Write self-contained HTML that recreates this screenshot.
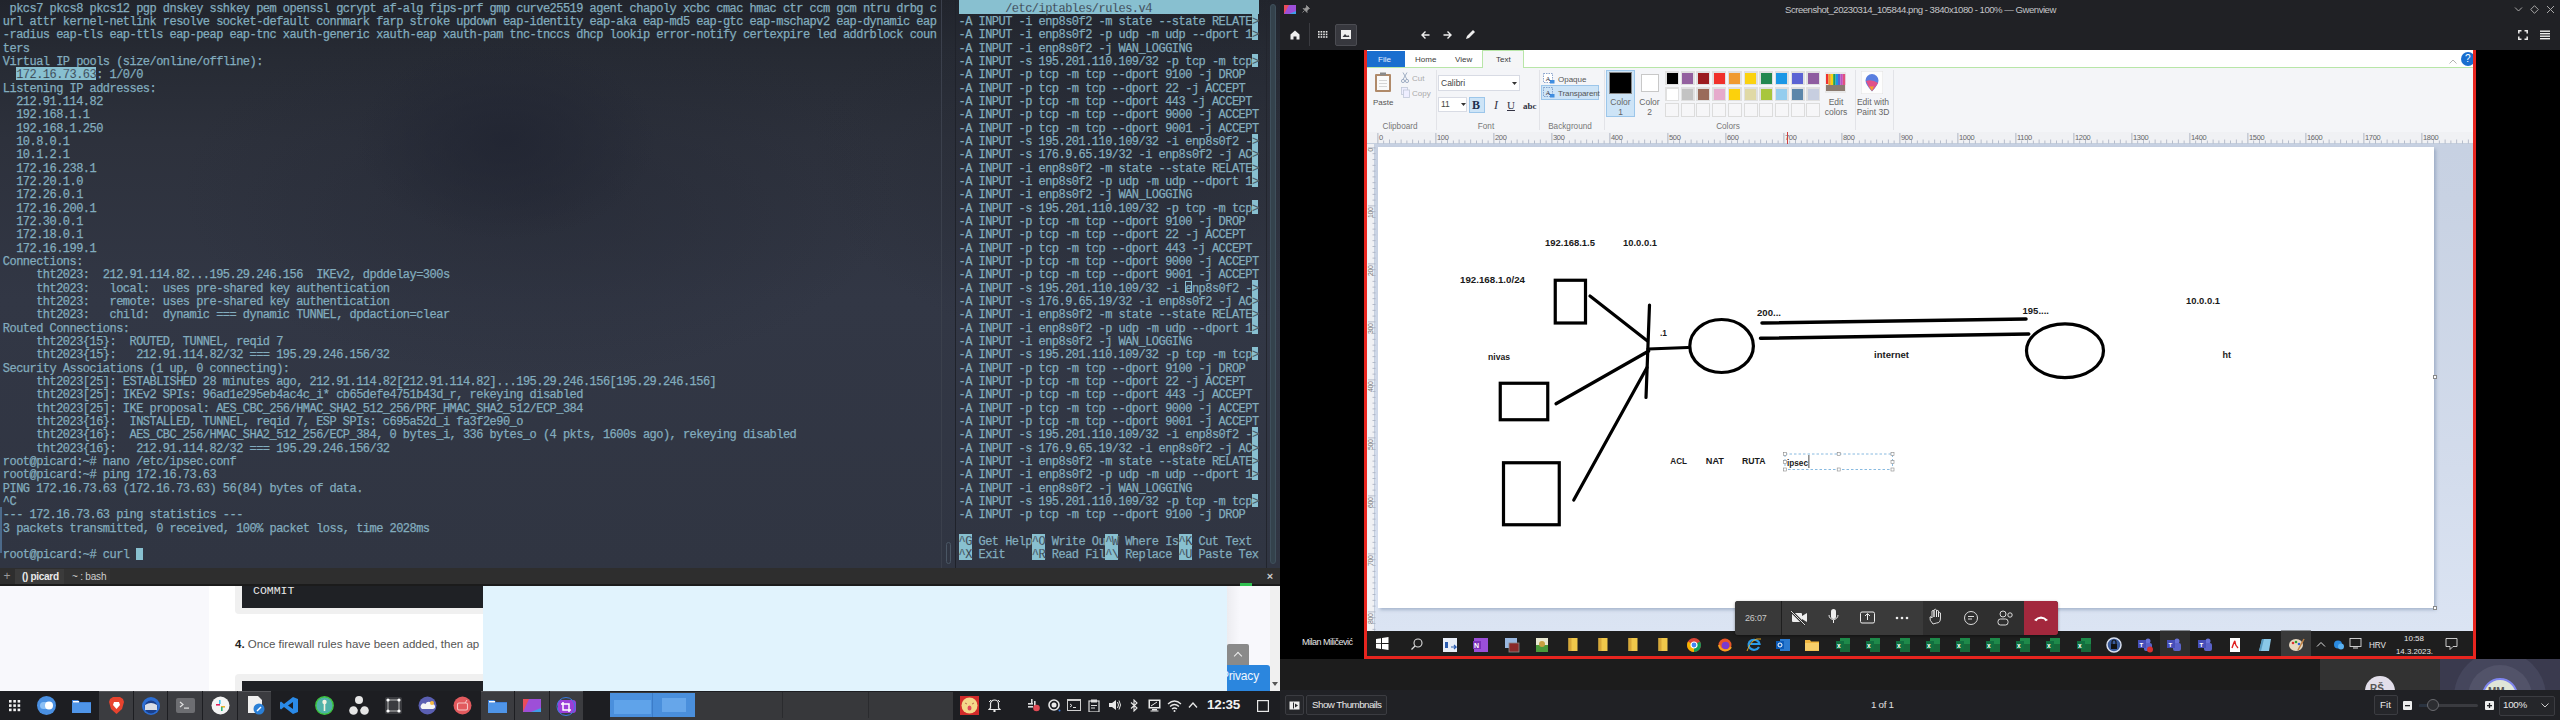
<!DOCTYPE html><html><head><meta charset="utf-8"><style>
*{box-sizing:border-box}
body{margin:0;width:2560px;height:720px;overflow:hidden;position:relative;background:#000;font-family:"Liberation Sans",sans-serif}
.a{position:absolute}
.term{position:absolute;left:0;top:0;width:1280px;height:568px;overflow:hidden;
 background:
  radial-gradient(ellipse 150px 100px at 506px 140px, rgba(33,37,50,0.85), rgba(33,37,50,0) 100%),
  radial-gradient(ellipse 360px 190px at 540px 190px, rgba(36,40,52,0.55), rgba(36,40,52,0) 100%),
  radial-gradient(ellipse 300px 200px at 1110px 150px, rgba(36,40,50,0.5), rgba(36,40,50,0) 100%),
  linear-gradient(180deg,#21242c 0px,#262a33 50px,#2d313c 140px,#323745 300px,#303542 568px);}
.tl{position:absolute;white-space:pre;font-family:"Liberation Mono",monospace;font-size:12px;line-height:13.333px;height:13.333px;color:#82acbe;letter-spacing:-0.5333px;padding-top:2.6px;-webkit-text-stroke:0.25px #82acbe}
.hl{background:#88c0d0;color:#2a2f3a}
</style></head><body>

<div class="term">
<div class="tl" style="left:2.8px;top:0.00px"> pkcs7 pkcs8 pkcs12 pgp dnskey sshkey pem openssl gcrypt af-alg fips-prf gmp curve25519 agent chapoly xcbc cmac hmac ctr ccm gcm ntru drbg c</div>
<div class="tl" style="left:2.8px;top:13.33px">url attr kernel-netlink resolve socket-default connmark farp stroke updown eap-identity eap-aka eap-md5 eap-gtc eap-mschapv2 eap-dynamic eap</div>
<div class="tl" style="left:2.8px;top:26.67px">-radius eap-tls eap-ttls eap-peap eap-tnc xauth-generic xauth-eap xauth-pam tnc-tnccs dhcp lookip error-notify certexpire led addrblock coun</div>
<div class="tl" style="left:2.8px;top:40.00px">ters</div>
<div class="tl" style="left:2.8px;top:53.33px">Virtual IP pools (size/online/offline):</div>
<div class="a" style="left:16.13px;top:66.97px;width:80.00px;height:13.33px;background:#88c0d0"></div>
<div class="tl" style="left:2.8px;top:66.67px">  <span style="color:#2a2f3a">172.16.73.63</span>: 1/0/0</div>
<div class="tl" style="left:2.8px;top:80.00px">Listening IP addresses:</div>
<div class="tl" style="left:2.8px;top:93.33px">  212.91.114.82</div>
<div class="tl" style="left:2.8px;top:106.67px">  192.168.1.1</div>
<div class="tl" style="left:2.8px;top:120.00px">  192.168.1.250</div>
<div class="tl" style="left:2.8px;top:133.33px">  10.8.0.1</div>
<div class="tl" style="left:2.8px;top:146.67px">  10.1.2.1</div>
<div class="tl" style="left:2.8px;top:160.00px">  172.16.238.1</div>
<div class="tl" style="left:2.8px;top:173.33px">  172.20.1.0</div>
<div class="tl" style="left:2.8px;top:186.67px">  172.26.0.1</div>
<div class="tl" style="left:2.8px;top:200.00px">  172.16.200.1</div>
<div class="tl" style="left:2.8px;top:213.33px">  172.30.0.1</div>
<div class="tl" style="left:2.8px;top:226.67px">  172.18.0.1</div>
<div class="tl" style="left:2.8px;top:240.00px">  172.16.199.1</div>
<div class="tl" style="left:2.8px;top:253.33px">Connections:</div>
<div class="tl" style="left:2.8px;top:266.67px">     tht2023:  212.91.114.82...195.29.246.156  IKEv2, dpddelay=300s</div>
<div class="tl" style="left:2.8px;top:280.00px">     tht2023:   local:  uses pre-shared key authentication</div>
<div class="tl" style="left:2.8px;top:293.33px">     tht2023:   remote: uses pre-shared key authentication</div>
<div class="tl" style="left:2.8px;top:306.67px">     tht2023:   child:  dynamic === dynamic TUNNEL, dpdaction=clear</div>
<div class="tl" style="left:2.8px;top:320.00px">Routed Connections:</div>
<div class="tl" style="left:2.8px;top:333.33px">     tht2023{15}:  ROUTED, TUNNEL, reqid 7</div>
<div class="tl" style="left:2.8px;top:346.67px">     tht2023{15}:   212.91.114.82/32 === 195.29.246.156/32</div>
<div class="tl" style="left:2.8px;top:360.00px">Security Associations (1 up, 0 connecting):</div>
<div class="tl" style="left:2.8px;top:373.33px">     tht2023[25]: ESTABLISHED 28 minutes ago, 212.91.114.82[212.91.114.82]...195.29.246.156[195.29.246.156]</div>
<div class="tl" style="left:2.8px;top:386.67px">     tht2023[25]: IKEv2 SPIs: 96ad1e295eb4ac4c_i* cb65defe4751b43d_r, rekeying disabled</div>
<div class="tl" style="left:2.8px;top:400.00px">     tht2023[25]: IKE proposal: AES_CBC_256/HMAC_SHA2_512_256/PRF_HMAC_SHA2_512/ECP_384</div>
<div class="tl" style="left:2.8px;top:413.33px">     tht2023{16}:  INSTALLED, TUNNEL, reqid 7, ESP SPIs: c695a52d_i fa3f2e90_o</div>
<div class="tl" style="left:2.8px;top:426.67px">     tht2023{16}:  AES_CBC_256/HMAC_SHA2_512_256/ECP_384, 0 bytes_i, 336 bytes_o (4 pkts, 1600s ago), rekeying disabled</div>
<div class="tl" style="left:2.8px;top:440.00px">     tht2023{16}:   212.91.114.82/32 === 195.29.246.156/32</div>
<div class="tl" style="left:2.8px;top:453.33px">root@picard:~# nano /etc/ipsec.conf</div>
<div class="tl" style="left:2.8px;top:466.67px">root@picard:~# ping 172.16.73.63</div>
<div class="tl" style="left:2.8px;top:480.00px">PING 172.16.73.63 (172.16.73.63) 56(84) bytes of data.</div>
<div class="tl" style="left:2.8px;top:493.33px">^C</div>
<div class="tl" style="left:2.8px;top:506.67px">--- 172.16.73.63 ping statistics ---</div>
<div class="tl" style="left:2.8px;top:520.00px">3 packets transmitted, 0 received, 100% packet loss, time 2028ms</div>
<div class="tl" style="left:2.8px;top:546.67px">root@picard:~# curl </div>
<div class="a" style="left:136.13px;top:547.67px;width:6.5px;height:12px;background:#88c0d0"></div>
<div class="a" style="left:0;top:506.67px;width:2px;height:46.67px;background:#4c6a8a"></div>
<div class="a" style="left:941px;top:0;width:1px;height:568px;background:#3b404c"></div>
<div class="a" style="left:955px;top:0;width:1px;height:568px;background:#1f222a"></div>
<div class="a" style="left:946px;top:542px;width:5px;height:22px;border:1px solid #4a5664;border-radius:3px"></div>
<div class="a" style="left:1266px;top:0;width:1px;height:568px;background:#22252d"></div>
<div class="a" style="left:1270px;top:4px;width:6px;height:560px;background:#34424c;border:1px solid #3f505c;border-radius:3px"></div>
<div class="a" style="left:958.5px;top:0.30px;width:300.00px;height:13.33px;background:#88c0d0"></div>
<div class="tl" style="left:958.5px;top:0.00px;color:#2a2f3a">       /etc/iptables/rules.v4</div>
<div class="a" style="left:1251.83px;top:13.63px;width:6.67px;height:26.67px;background:#88c0d0"></div>
<div class="a" style="left:1251.83px;top:53.63px;width:6.67px;height:13.33px;background:#88c0d0"></div>
<div class="a" style="left:1251.83px;top:133.63px;width:6.67px;height:53.33px;background:#88c0d0"></div>
<div class="a" style="left:1251.83px;top:200.30px;width:6.67px;height:13.33px;background:#88c0d0"></div>
<div class="a" style="left:1251.83px;top:280.30px;width:6.67px;height:53.33px;background:#88c0d0"></div>
<div class="a" style="left:1251.83px;top:346.97px;width:6.67px;height:13.33px;background:#88c0d0"></div>
<div class="a" style="left:1251.83px;top:426.97px;width:6.67px;height:53.33px;background:#88c0d0"></div>
<div class="a" style="left:1251.83px;top:493.63px;width:6.67px;height:13.33px;background:#88c0d0"></div>
<div class="tl" style="left:958.5px;top:13.33px">-A INPUT -i enp8s0f2 -m state --state RELATE<span style="color:#2a2f3a">&gt;</span></div>
<div class="tl" style="left:958.5px;top:26.67px">-A INPUT -i enp8s0f2 -p udp -m udp --dport 1<span style="color:#2a2f3a">&gt;</span></div>
<div class="tl" style="left:958.5px;top:40.00px">-A INPUT -i enp8s0f2 -j WAN_LOGGING</div>
<div class="tl" style="left:958.5px;top:53.33px">-A INPUT -s 195.201.110.109/32 -p tcp -m tcp<span style="color:#2a2f3a">&gt;</span></div>
<div class="tl" style="left:958.5px;top:66.67px">-A INPUT -p tcp -m tcp --dport 9100 -j DROP</div>
<div class="tl" style="left:958.5px;top:80.00px">-A INPUT -p tcp -m tcp --dport 22 -j ACCEPT</div>
<div class="tl" style="left:958.5px;top:93.33px">-A INPUT -p tcp -m tcp --dport 443 -j ACCEPT</div>
<div class="tl" style="left:958.5px;top:106.67px">-A INPUT -p tcp -m tcp --dport 9000 -j ACCEPT</div>
<div class="tl" style="left:958.5px;top:120.00px">-A INPUT -p tcp -m tcp --dport 9001 -j ACCEPT</div>
<div class="tl" style="left:958.5px;top:133.33px">-A INPUT -s 195.201.110.109/32 -i enp8s0f2 -<span style="color:#2a2f3a">&gt;</span></div>
<div class="tl" style="left:958.5px;top:146.67px">-A INPUT -s 176.9.65.19/32 -i enp8s0f2 -j AC<span style="color:#2a2f3a">&gt;</span></div>
<div class="tl" style="left:958.5px;top:160.00px">-A INPUT -i enp8s0f2 -m state --state RELATE<span style="color:#2a2f3a">&gt;</span></div>
<div class="tl" style="left:958.5px;top:173.33px">-A INPUT -i enp8s0f2 -p udp -m udp --dport 1<span style="color:#2a2f3a">&gt;</span></div>
<div class="tl" style="left:958.5px;top:186.67px">-A INPUT -i enp8s0f2 -j WAN_LOGGING</div>
<div class="tl" style="left:958.5px;top:200.00px">-A INPUT -s 195.201.110.109/32 -p tcp -m tcp<span style="color:#2a2f3a">&gt;</span></div>
<div class="tl" style="left:958.5px;top:213.33px">-A INPUT -p tcp -m tcp --dport 9100 -j DROP</div>
<div class="tl" style="left:958.5px;top:226.67px">-A INPUT -p tcp -m tcp --dport 22 -j ACCEPT</div>
<div class="tl" style="left:958.5px;top:240.00px">-A INPUT -p tcp -m tcp --dport 443 -j ACCEPT</div>
<div class="tl" style="left:958.5px;top:253.33px">-A INPUT -p tcp -m tcp --dport 9000 -j ACCEPT</div>
<div class="tl" style="left:958.5px;top:266.67px">-A INPUT -p tcp -m tcp --dport 9001 -j ACCEPT</div>
<div class="tl" style="left:958.5px;top:280.00px">-A INPUT -s 195.201.110.109/32 -i enp8s0f2 -<span style="color:#2a2f3a">&gt;</span></div>
<div class="tl" style="left:958.5px;top:293.33px">-A INPUT -s 176.9.65.19/32 -i enp8s0f2 -j AC<span style="color:#2a2f3a">&gt;</span></div>
<div class="tl" style="left:958.5px;top:306.67px">-A INPUT -i enp8s0f2 -m state --state RELATE<span style="color:#2a2f3a">&gt;</span></div>
<div class="tl" style="left:958.5px;top:320.00px">-A INPUT -i enp8s0f2 -p udp -m udp --dport 1<span style="color:#2a2f3a">&gt;</span></div>
<div class="tl" style="left:958.5px;top:333.33px">-A INPUT -i enp8s0f2 -j WAN_LOGGING</div>
<div class="tl" style="left:958.5px;top:346.67px">-A INPUT -s 195.201.110.109/32 -p tcp -m tcp<span style="color:#2a2f3a">&gt;</span></div>
<div class="tl" style="left:958.5px;top:360.00px">-A INPUT -p tcp -m tcp --dport 9100 -j DROP</div>
<div class="tl" style="left:958.5px;top:373.33px">-A INPUT -p tcp -m tcp --dport 22 -j ACCEPT</div>
<div class="tl" style="left:958.5px;top:386.67px">-A INPUT -p tcp -m tcp --dport 443 -j ACCEPT</div>
<div class="tl" style="left:958.5px;top:400.00px">-A INPUT -p tcp -m tcp --dport 9000 -j ACCEPT</div>
<div class="tl" style="left:958.5px;top:413.33px">-A INPUT -p tcp -m tcp --dport 9001 -j ACCEPT</div>
<div class="tl" style="left:958.5px;top:426.67px">-A INPUT -s 195.201.110.109/32 -i enp8s0f2 -<span style="color:#2a2f3a">&gt;</span></div>
<div class="tl" style="left:958.5px;top:440.00px">-A INPUT -s 176.9.65.19/32 -i enp8s0f2 -j AC<span style="color:#2a2f3a">&gt;</span></div>
<div class="tl" style="left:958.5px;top:453.33px">-A INPUT -i enp8s0f2 -m state --state RELATE<span style="color:#2a2f3a">&gt;</span></div>
<div class="tl" style="left:958.5px;top:466.67px">-A INPUT -i enp8s0f2 -p udp -m udp --dport 1<span style="color:#2a2f3a">&gt;</span></div>
<div class="tl" style="left:958.5px;top:480.00px">-A INPUT -i enp8s0f2 -j WAN_LOGGING</div>
<div class="tl" style="left:958.5px;top:493.33px">-A INPUT -s 195.201.110.109/32 -p tcp -m tcp<span style="color:#2a2f3a">&gt;</span></div>
<div class="tl" style="left:958.5px;top:506.67px">-A INPUT -p tcp -m tcp --dport 9100 -j DROP</div>
<div class="a" style="left:1185.17px;top:280.50px;width:6.67px;height:12.33px;border:1px solid #88c0d0"></div>
<div class="a" style="left:958.50px;top:533.63px;width:13.33px;height:13.33px;background:#88c0d0"></div>
<div class="tl" style="left:958.50px;top:533.33px;color:#2a2f3a">^G</div>
<div class="tl" style="left:971.83px;top:533.33px"> Get Help</div>
<div class="a" style="left:1031.83px;top:533.63px;width:13.33px;height:13.33px;background:#88c0d0"></div>
<div class="tl" style="left:1031.83px;top:533.33px;color:#2a2f3a">^O</div>
<div class="tl" style="left:1045.17px;top:533.33px"> Write Ou</div>
<div class="a" style="left:1105.17px;top:533.63px;width:13.33px;height:13.33px;background:#88c0d0"></div>
<div class="tl" style="left:1105.17px;top:533.33px;color:#2a2f3a">^W</div>
<div class="tl" style="left:1118.50px;top:533.33px"> Where Is</div>
<div class="a" style="left:1178.50px;top:533.63px;width:13.33px;height:13.33px;background:#88c0d0"></div>
<div class="tl" style="left:1178.50px;top:533.33px;color:#2a2f3a">^K</div>
<div class="tl" style="left:1191.83px;top:533.33px"> Cut Text</div>
<div class="a" style="left:958.50px;top:546.97px;width:13.33px;height:13.33px;background:#88c0d0"></div>
<div class="tl" style="left:958.50px;top:546.67px;color:#2a2f3a">^X</div>
<div class="tl" style="left:971.83px;top:546.67px"> Exit    </div>
<div class="a" style="left:1031.83px;top:546.97px;width:13.33px;height:13.33px;background:#88c0d0"></div>
<div class="tl" style="left:1031.83px;top:546.67px;color:#2a2f3a">^R</div>
<div class="tl" style="left:1045.17px;top:546.67px"> Read Fil</div>
<div class="a" style="left:1105.17px;top:546.97px;width:13.33px;height:13.33px;background:#88c0d0"></div>
<div class="tl" style="left:1105.17px;top:546.67px;color:#2a2f3a">^\</div>
<div class="tl" style="left:1118.50px;top:546.67px"> Replace </div>
<div class="a" style="left:1178.50px;top:546.97px;width:13.33px;height:13.33px;background:#88c0d0"></div>
<div class="tl" style="left:1178.50px;top:546.67px;color:#2a2f3a">^U</div>
<div class="tl" style="left:1191.83px;top:546.67px"> Paste Tex</div>
</div>
<div class="a" style="left:0;top:568px;width:1280px;height:18px;background:#2e2e2e;border-bottom:2px solid #1b1b1b"></div>
<div class="a" style="left:0;top:568px;width:14px;height:16px;color:#9a9a9a;font-size:12px;line-height:16px;text-align:center">+</div>
<div class="a" style="left:15px;top:569px;width:49px;height:15px;background:#3b3b3b"></div>
<div class="a" style="left:22px;top:569px;font-size:10px;line-height:15px;color:#eaeaea;font-weight:bold;letter-spacing:-0.3px">() picard</div>
<div class="a" style="left:64px;top:569px;width:46px;height:15px;background:#333333"></div>
<div class="a" style="left:72px;top:569px;font-size:10px;line-height:15px;color:#cfcfcf;letter-spacing:-0.2px">~ : bash</div>
<div class="a" style="left:1264px;top:568px;width:12px;height:16px;color:#cccccc;font-size:11px;line-height:16px;text-align:center;font-weight:bold">&#215;</div>
<div class="a" style="left:1240px;top:583px;width:12px;height:3px;background:#2fbf4f"></div>

<div class="a" style="left:0;top:586px;width:1280px;height:105px;background:#ffffff;overflow:hidden">
 <div class="a" style="left:0;top:0;width:209px;height:105px;background:#f8f8fc"></div>
 <div class="a" style="left:235px;top:-10px;width:260px;height:38px;background:#f0f0f0;border-radius:4px"></div>
 <div class="a" style="left:242px;top:-10px;width:250px;height:32px;background:#1f2125"></div>
 <div class="a" style="left:253px;top:-2px;font-family:'Liberation Mono',monospace;font-size:11.5px;line-height:14px;color:#e8e8e8">COMMIT</div>
 <div class="a" style="left:235px;top:51px;font-size:11.5px;line-height:14px;color:#555;white-space:nowrap"><b style="color:#222">4.</b> Once firewall rules have been added, then ap</div>
 <div class="a" style="left:235px;top:88px;width:260px;height:30px;background:#f0f0f0;border-radius:4px"></div>
 <div class="a" style="left:242px;top:95px;width:250px;height:30px;background:#1f2125"></div>
 <div class="a" style="left:483px;top:0;width:744px;height:105px;background:#e1f3fd"></div>
 <div class="a" style="left:1227px;top:0;width:43px;height:105px;background:linear-gradient(90deg,#ececf0,#f8f8fc 30%,#f8f8fc)"></div>
 <div class="a" style="left:1227px;top:58px;width:22px;height:22px;background:#8a8a8a;border-radius:2px 2px 0 0"></div>
 <div class="a" style="left:1235px;top:67px;width:6px;height:6px;border-left:1.5px solid #eee;border-top:1.5px solid #eee;transform:rotate(45deg);transform-origin:center" ></div>
 <div class="a" style="left:1227px;top:79px;width:43px;height:26px;background:#2b86de;border-radius:0 3px 0 0;overflow:hidden"><div class="a" style="left:-6px;top:4px;font-size:12px;line-height:14px;color:#f0f6ff;white-space:nowrap;letter-spacing:-0.2px">Privacy</div></div>
 <div class="a" style="left:1270px;top:0;width:10px;height:105px;background:#f0f0f0"></div>
 <div class="a" style="left:1272px;top:96px;width:0;height:0;border-left:3px solid transparent;border-right:3px solid transparent;border-top:4px solid #555"></div>
</div>

<div class="a" style="left:0;top:691px;width:1280px;height:29px;background:#1d1e22"></div>
<div class="a" style="left:99px;top:691px;width:34px;height:29px;background:#3b3c40;border-top:1px solid #55565a"></div>
<div class="a" style="left:134px;top:691px;width:33px;height:29px;background:#3b3c40;border-top:1px solid #55565a"></div>
<div class="a" style="left:168px;top:691px;width:34px;height:29px;background:#3b3c40;border-top:1px solid #55565a"></div>
<div class="a" style="left:203px;top:691px;width:34px;height:29px;background:#3b3c40;border-top:1px solid #55565a"></div>
<div class="a" style="left:238px;top:691px;width:33px;height:29px;background:#3b3c40;border-top:1px solid #55565a"></div>
<div class="a" style="left:481px;top:691px;width:33px;height:29px;background:#3b3c40;border-top:1px solid #55565a"></div>
<div class="a" style="left:515px;top:691px;width:34px;height:29px;background:#3b3c40;border-top:1px solid #55565a"></div>
<div class="a" style="left:550px;top:691px;width:33px;height:29px;background:#3b3c40;border-top:1px solid #55565a"></div>
<div class="a" style="left:610px;top:692px;width:343px;height:28px;background:#37383b"></div>
<div class="a" style="left:782px;top:692px;width:1px;height:26px;background:#2a2b2e"></div>
<div class="a" style="left:868px;top:692px;width:1px;height:26px;background:#2a2b2e"></div>
<div class="a" style="left:610px;top:693px;width:85px;height:24px;background:#4a8fdc"></div>
<div class="a" style="left:614px;top:700px;width:37px;height:14px;background:#5fa3ea"></div>
<div class="a" style="left:662px;top:698px;width:24px;height:14px;background:#66a6ea"></div>
<div class="a" style="left:652px;top:693px;width:1px;height:24px;background:#3c7cc8"></div>
<svg class="a" style="left:8px;top:699px" width="14" height="14" viewBox="0 0 14 14"><rect x="1.0" y="1.0" width="2.6" height="2.6" fill="#f2f2f2"/><rect x="5.3" y="1.0" width="2.6" height="2.6" fill="#f2f2f2"/><rect x="9.6" y="1.0" width="2.6" height="2.6" fill="#f2f2f2"/><rect x="1.0" y="5.3" width="2.6" height="2.6" fill="#f2f2f2"/><rect x="5.3" y="5.3" width="2.6" height="2.6" fill="#f2f2f2"/><rect x="9.6" y="5.3" width="2.6" height="2.6" fill="#f2f2f2"/><rect x="1.0" y="9.6" width="2.6" height="2.6" fill="#f2f2f2"/><rect x="5.3" y="9.6" width="2.6" height="2.6" fill="#f2f2f2"/><rect x="9.6" y="9.6" width="2.6" height="2.6" fill="#f2f2f2"/></svg>
<svg class="a" style="left:36px;top:695px" width="21" height="21" viewBox="0 0 21 21"><circle cx="10.5" cy="10.5" r="9.5" fill="#4a90e2"/><rect x="4" y="7" width="12" height="7" rx="3.5" fill="#8cc0f5"/><circle cx="13" cy="10.5" r="4" fill="#fff"/></svg>
<svg class="a" style="left:71px;top:698px" width="21" height="16" viewBox="0 0 21 16"><path d="M1 2 h6 l2 2 h11 v11 h-19z" fill="#3d7fd6"/><rect x="1" y="5" width="19" height="10" fill="#4f95e8"/><rect x="2" y="3" width="6" height="1.5" fill="#fff"/></svg>
<svg class="a" style="left:108px;top:696px" width="17" height="19" viewBox="0 0 17 19"><path d="M2 3 L5 1 h7 l3 2 l1 3 l-2 7 l-5.5 5 l-5.5 -5 l-2 -7z" fill="#e8432e"/><path d="M6 6 h5 l1 3 l-3.5 4 l-3.5-4z" fill="#fff"/></svg>
<svg class="a" style="left:141px;top:696px" width="20" height="20" viewBox="0 0 20 20"><circle cx="10" cy="10" r="9" fill="#2c6ed4"/><circle cx="10" cy="11" r="6.5" fill="#1a3f8a"/><path d="M4 9 q6 -4 12 0 v5 h-12z" fill="#d8dde6"/></svg>
<svg class="a" style="left:176px;top:698px" width="19" height="15" viewBox="0 0 19 15"><rect x="0" y="0" width="19" height="15" rx="2" fill="#6d6e72"/><path d="M4 4 l3 2.5 l-3 2.5" stroke="#e0e0e0" stroke-width="1.2" fill="none"/><rect x="8" y="9.5" width="5" height="1.2" fill="#e0e0e0"/></svg>
<svg class="a" style="left:211px;top:696px" width="19" height="19" viewBox="0 0 19 19"><circle cx="9.5" cy="9.5" r="9" fill="#f4f4f4"/><rect x="5" y="8" width="4" height="1.6" fill="#e01e5a"/><rect x="8" y="4" width="1.6" height="4" fill="#36c5f0"/><rect x="10" y="10" width="4" height="1.6" fill="#ecb22e"/><rect x="10" y="11" width="1.6" height="4" fill="#2eb67d"/></svg>
<svg class="a" style="left:247px;top:696px" width="18" height="19" viewBox="0 0 18 19"><path d="M1 0 h10 l4 4 v13 h-14z" fill="#f0f0f0"/><circle cx="12" cy="13" r="5.5" fill="#2a7fd6"/><path d="M10 15 l4 -4" stroke="#fff" stroke-width="1.4"/></svg>
<svg class="a" style="left:280px;top:697px" width="18" height="17" viewBox="0 0 18 17"><path d="M13 0 l5 2 v13 l-5 2 l-9 -7 l-3 2.5 l-1 -1 v-6 l1 -1 l3 2.5z M13 5 l-5 3.5 l5 3.5z" fill="#2a8ae8" fill-rule="evenodd"/></svg>
<svg class="a" style="left:315px;top:696px" width="19" height="19" viewBox="0 0 19 19"><circle cx="9.5" cy="9.5" r="8.7" fill="#4fb2a8" stroke="#3ec43e" stroke-width="1.4"/><circle cx="9.5" cy="6" r="2.2" fill="#f2f2e0"/><rect x="8.7" y="7" width="1.6" height="8" fill="#f2f2e0"/></svg>
<svg class="a" style="left:349px;top:695px" width="20" height="20" viewBox="0 0 20 20"><circle cx="10" cy="5" r="4" fill="#e6e6e6"/><circle cx="4.5" cy="15.5" r="4.3" fill="#e6e6e6"/><circle cx="15.5" cy="15.5" r="4.3" fill="#e6e6e6"/><circle cx="10" cy="11.5" r="2.5" fill="#1d1e22"/></svg>
<svg class="a" style="left:385px;top:697px" width="17" height="17" viewBox="0 0 17 17"><rect x="0" y="0" width="17" height="17" rx="2" fill="#3a3b3f"/><rect x="3" y="3" width="11" height="11" fill="none" stroke="#ddd" stroke-width="0.8"/><circle cx="3" cy="3" r="1.6" fill="#fff"/><circle cx="14" cy="3" r="1.6" fill="#fff"/><circle cx="3" cy="14" r="1.6" fill="#fff"/><circle cx="14" cy="14" r="1.6" fill="#fff"/></svg>
<svg class="a" style="left:418px;top:696px" width="19" height="19" viewBox="0 0 19 19"><circle cx="9.5" cy="9.5" r="9" fill="#5a5fb2"/><path d="M4 13 h11 a2.5 2.5 0 0 0 -1 -5 a3.5 3.5 0 0 0 -6.5 0 a2.5 2.5 0 0 0 -3.5 5z" fill="#f4f4f4"/><circle cx="14" cy="7" r="2" fill="#f5b942"/></svg>
<svg class="a" style="left:453px;top:696px" width="19" height="19" viewBox="0 0 19 19"><circle cx="9.5" cy="9.5" r="9" fill="#e25a5e"/><rect x="4.5" y="7" width="10" height="7" rx="1.5" fill="none" stroke="#f5c6c6" stroke-width="1.1"/><path d="M12 7 l2 -3" stroke="#f5c6c6" stroke-width="1"/></svg>
<svg class="a" style="left:487px;top:698px" width="21" height="16" viewBox="0 0 21 16"><path d="M1 2 h6 l2 2 h11 v11 h-19z" fill="#3d7fd6"/><rect x="1" y="5" width="19" height="10" fill="#4f95e8"/><rect x="2" y="3" width="6" height="1.5" fill="#fff"/></svg>
<svg class="a" style="left:523px;top:699px" width="18" height="13" viewBox="0 0 18 13"><rect width="18" height="13" fill="#9d4fd8"/><path d="M0 0 h6 l-6 13z" fill="#e94d5a"/><path d="M8 13 l10 -4 v4z" fill="#3f9ee8"/></svg>
<svg class="a" style="left:556px;top:697px" width="21" height="19" viewBox="0 0 21 19"><rect x="2" y="3" width="18" height="13" rx="3" fill="#9b3fd8"/><circle cx="10" cy="9.5" r="9" fill="none" stroke="#3a7be0" stroke-width="1"/><path d="M7 5 v8 h8 M5 7 h8 v8" stroke="#fff" stroke-width="1.5" fill="none"/></svg>
<svg class="a" style="left:960px;top:696px" width="19" height="19" viewBox="0 0 19 19"><rect width="19" height="19" fill="#d22a2a"/><circle cx="9.5" cy="9.5" r="8" fill="#f4d88a"/><ellipse cx="9.5" cy="12" rx="2" ry="2.5" fill="#e04a5a"/><path d="M5 7 l2 1 M14 7 l-2 1" stroke="#c07050" stroke-width="1"/></svg>
<svg class="a" style="left:988px;top:699px" width="13" height="13" viewBox="0 0 13 13"><path d="M6.5 1 a4 4 0 0 1 4 4 v4 l1.5 1.5 h-11 l1.5 -1.5 v-4 a4 4 0 0 1 4 -4z" fill="none" stroke="#e8e8e8" stroke-width="1.2"/><circle cx="6.5" cy="12" r="1.2" fill="#e8e8e8"/><path d="M1 3 l2 -2 M12 3 l-2 -2" stroke="#e8e8e8" stroke-width="1"/></svg>
<svg class="a" style="left:1027px;top:699px" width="14" height="13" viewBox="0 0 14 13"><rect x="1" y="4" width="5" height="1.6" fill="#ddd"/><rect x="4" y="0" width="1.6" height="5" fill="#ddd"/><rect x="7" y="2" width="1.6" height="5" fill="#ddd"/><rect x="1" y="7" width="5" height="1.6" fill="#ddd"/><circle cx="9.5" cy="9" r="3.3" fill="#e14a55"/></svg>
<svg class="a" style="left:1048px;top:699px" width="13" height="13" viewBox="0 0 13 13"><circle cx="6" cy="6" r="5" fill="none" stroke="#e8e8e8" stroke-width="1.6"/><circle cx="6" cy="6" r="2.5" fill="#e8e8e8"/><circle cx="11.5" cy="11.5" r="1" fill="#3a7be0"/></svg>
<svg class="a" style="left:1067px;top:699px" width="14" height="12" viewBox="0 0 14 12"><rect x="0.5" y="0.5" width="13" height="11" fill="none" stroke="#cfcfcf" stroke-width="1"/><rect x="0.5" y="0.5" width="13" height="1.5" fill="#cfcfcf"/><path d="M3 5 l2 1.5 l-2 1.5" stroke="#ddd" fill="none"/><rect x="6" y="8" width="3" height="1" fill="#ddd"/></svg>
<svg class="a" style="left:1088px;top:699px" width="12" height="13" viewBox="0 0 12 13"><rect x="1" y="2" width="10" height="11" fill="none" stroke="#ddd" stroke-width="1.2"/><rect x="3" y="0.5" width="6" height="3" fill="#ddd"/><rect x="3" y="6" width="6" height="1" fill="#ddd"/><rect x="3" y="8.5" width="4" height="1" fill="#ddd"/></svg>
<svg class="a" style="left:1108px;top:699px" width="13" height="12" viewBox="0 0 13 12"><path d="M1 4 h3 l4 -3 v10 l-4 -3 h-3z" fill="#e8e8e8"/><path d="M9.5 3 q2 3 0 6 M11 1.5 q3 4.5 0 9" stroke="#e8e8e8" fill="none" stroke-width="1"/></svg>
<svg class="a" style="left:1130px;top:699px" width="8" height="13" viewBox="0 0 8 13"><path d="M1 3.5 l6 5.5 l-3 3 v-11 l3 3 l-6 5.5" stroke="#e8e8e8" fill="none" stroke-width="1.1"/></svg>
<svg class="a" style="left:1148px;top:699px" width="13" height="13" viewBox="0 0 13 13"><rect x="0.5" y="0.5" width="12" height="9" fill="#e8e8e8"/><rect x="2" y="2" width="9" height="6" fill="#1d1e22"/><path d="M3 7 l6 -4" stroke="#e8e8e8"/><rect x="4" y="10" width="5" height="1.5" fill="#e8e8e8"/><rect x="2.5" y="11.5" width="8" height="1" fill="#e8e8e8"/></svg>
<svg class="a" style="left:1167px;top:699px" width="15" height="13" viewBox="0 0 15 13"><path d="M1 5 q6.5 -6 13 0 M3 7.5 q4.5 -4 9 0 M5 10 q2.5 -2 5 0" stroke="#e8e8e8" fill="none" stroke-width="1.3"/><circle cx="7.5" cy="12" r="1" fill="#e8e8e8"/></svg>
<svg class="a" style="left:1188px;top:701px" width="10" height="8" viewBox="0 0 10 8"><path d="M1 6.5 l4 -4.5 l4 4.5" stroke="#e8e8e8" fill="none" stroke-width="1.3"/></svg>
<div class="a" style="left:1207px;top:697px;font-size:13.5px;line-height:16px;color:#f2f2f2;font-weight:bold;letter-spacing:-0.3px">12:35</div>
<svg class="a" style="left:1257px;top:700px" width="12" height="12" viewBox="0 0 12 12"><rect x="0.6" y="0.6" width="10.8" height="10.8" fill="none" stroke="#e8e8e8" stroke-width="1.2"/></svg>
<div class="a" style="left:1280px;top:0;width:1280px;height:50px;background:#202125"></div>
<svg class="a" style="left:1284px;top:5px" width="12" height="9" viewBox="0 0 12 9"><rect width="12" height="9" fill="#9d4fd8"/><path d="M0 0 h5 l-5 9z" fill="#e94d5a"/><path d="M5 9 l7 -3 v3z" fill="#3f9ee8"/></svg>
<svg class="a" style="left:1302px;top:5px" width="8" height="8" viewBox="0 0 8 8"><path d="M4.5 0.5 l3 3 l-1.2 0.5 l-1.5 2 l0.3 1.5 l-4-4 l1.5 0.3 l2 -1.5z M2.5 5.5 l-2 2" stroke="#9a9a9a" fill="#9a9a9a" stroke-width="0.8"/></svg>
<div class="a" style="left:1785px;top:3px;font-size:9.6px;line-height:14px;color:#c4c5c8;white-space:nowrap;letter-spacing:-0.5px">Screenshot_20230314_105844.png - 3840x1080 - 100% &#8212; Gwenview</div>
<svg class="a" style="left:2514px;top:6px" width="9" height="7" viewBox="0 0 9 7"><path d="M1 1.5 l3.5 3.5 l3.5 -3.5" stroke="#a8a8a8" fill="none" stroke-width="1"/></svg>
<svg class="a" style="left:2530px;top:5px" width="9" height="9" viewBox="0 0 9 9"><path d="M4.5 0.7 l3.8 3.8 l-3.8 3.8 l-3.8 -3.8z" stroke="#a8a8a8" fill="none" stroke-width="1"/></svg>
<svg class="a" style="left:2546px;top:5px" width="9" height="9" viewBox="0 0 9 9"><path d="M1 1 l7 7 M8 1 l-7 7" stroke="#a8a8a8" fill="none" stroke-width="1"/></svg>
<svg class="a" style="left:1290px;top:30px" width="10" height="10" viewBox="0 0 10 10"><path d="M5 0.5 l4.5 4 v5 h-3 v-3 h-3 v3 h-3 v-5z" fill="#eeeeee"/></svg>
<div class="a" style="left:1309px;top:23px;width:1px;height:23px;background:#3a3b40"></div>
<svg class="a" style="left:1318px;top:31px" width="11" height="8" viewBox="0 0 11 8"><rect x="0.0" y="0.0" width="1.6" height="1.6" fill="#e8e8e8"/><rect x="2.6" y="0.0" width="1.6" height="1.6" fill="#e8e8e8"/><rect x="5.2" y="0.0" width="1.6" height="1.6" fill="#e8e8e8"/><rect x="7.8" y="0.0" width="1.6" height="1.6" fill="#e8e8e8"/><rect x="0.0" y="2.6" width="1.6" height="1.6" fill="#e8e8e8"/><rect x="2.6" y="2.6" width="1.6" height="1.6" fill="#e8e8e8"/><rect x="5.2" y="2.6" width="1.6" height="1.6" fill="#e8e8e8"/><rect x="7.8" y="2.6" width="1.6" height="1.6" fill="#e8e8e8"/><rect x="0.0" y="5.2" width="1.6" height="1.6" fill="#e8e8e8"/><rect x="2.6" y="5.2" width="1.6" height="1.6" fill="#e8e8e8"/><rect x="5.2" y="5.2" width="1.6" height="1.6" fill="#e8e8e8"/><rect x="7.8" y="5.2" width="1.6" height="1.6" fill="#e8e8e8"/></svg>
<div class="a" style="left:1335px;top:24px;width:22px;height:22px;background:#37383e;border:1px solid #4b4c52;border-radius:2px"></div>
<svg class="a" style="left:1341px;top:30px" width="10" height="9" viewBox="0 0 10 9"><rect x="0" y="0" width="10" height="9" fill="#eeeeee"/><path d="M1.5 7 l2.5 -3 l2 2 l1.3 -1 l1.2 2z" fill="#37383e"/></svg>
<svg class="a" style="left:1421px;top:30px" width="9" height="10" viewBox="0 0 9 10"><path d="M8.5 5 h-7 M4.5 1.5 l-3.5 3.5 l3.5 3.5" stroke="#eee" fill="none" stroke-width="1.4"/></svg>
<svg class="a" style="left:1443px;top:30px" width="9" height="10" viewBox="0 0 9 10"><path d="M0.5 5 h7 M4.5 1.5 l3.5 3.5 l-3.5 3.5" stroke="#eee" fill="none" stroke-width="1.4"/></svg>
<svg class="a" style="left:1465px;top:29px" width="11" height="11" viewBox="0 0 11 11"><path d="M1 10 l1 -3 l6 -6 l2 2 l-6 6z" fill="#eee"/></svg>
<svg class="a" style="left:2518px;top:30px" width="10" height="10" viewBox="0 0 10 10"><path d="M0.8 3.5 v-2.7 h2.7 M6.5 0.8 h2.7 v2.7 M9.2 6.5 v2.7 h-2.7 M3.5 9.2 h-2.7 v-2.7" stroke="#eee" fill="none" stroke-width="1.5"/></svg>
<svg class="a" style="left:2540px;top:30px" width="10" height="10" viewBox="0 0 10 10"><rect x="0" y="0.5" width="10" height="1.4" fill="#eee"/><rect x="0" y="3" width="10" height="1.4" fill="#eee"/><rect x="0" y="5.5" width="10" height="1.4" fill="#eee"/><rect x="0" y="8" width="10" height="1.4" fill="#eee"/></svg>
<div class="a" style="left:1280px;top:50px;width:1280px;height:640px;background:#000"></div>
<div class="a" style="left:1280px;top:659px;width:1040px;height:31px;background:#1c1c1c"></div>
<div class="a" style="left:2320px;top:659px;width:120px;height:31px;background:#323232;overflow:hidden"><div class="a" style="left:45px;top:17px;width:30px;height:30px;border-radius:50%;background:#e2deea"></div><div class="a" style="left:50px;top:24px;font-size:10px;color:#555;font-weight:bold">R&#352;</div></div>
<div class="a" style="left:2440px;top:659px;width:120px;height:31px;background:#3a3a4e;overflow:hidden"><div class="a" style="left:14px;top:-8px;width:92px;height:92px;border-radius:50%;background:#45465c"></div><div class="a" style="left:28px;top:6px;width:64px;height:64px;border-radius:50%;background:#525369"></div><div class="a" style="left:42px;top:19px;width:36px;height:36px;border-radius:50%;background:#dfe6d8;border:2px solid #7f86f0"></div><div class="a" style="left:48px;top:27px;font-size:10px;color:#555;font-weight:bold">MM</div></div>
<div class="a" style="left:1302px;top:636px;font-size:9px;line-height:12px;color:#e8e8e8;white-space:nowrap;letter-spacing:-0.5px">Milan Mili&#269;evi&#263;</div>
<div class="a" style="left:1280px;top:690px;width:1280px;height:30px;background:#202125"></div>
<div class="a" style="left:1285px;top:695px;width:19px;height:20px;border:1px solid #3b3c41;border-radius:2px;background:#25262a"></div>
<svg class="a" style="left:1289px;top:701px" width="11" height="9" viewBox="0 0 11 9"><rect x="0.5" y="0.5" width="10" height="8" fill="#eee"/><rect x="4" y="1.5" width="1" height="6" fill="#25262a"/><path d="M6 2.5 l3 2 l-3 2z" fill="#25262a"/></svg>
<div class="a" style="left:1306px;top:695px;width:81px;height:20px;border:1px solid #3b3c41;border-radius:2px;background:#25262a"></div>
<div class="a" style="left:1312px;top:699px;font-size:9.8px;line-height:12px;color:#e8e8e8;white-space:nowrap;letter-spacing:-0.55px">Show Thumbnails</div>
<div class="a" style="left:1871px;top:699px;font-size:9.8px;line-height:12px;color:#e0e0e0;white-space:nowrap;letter-spacing:-0.3px">1 of 1</div>
<div class="a" style="left:2374px;top:695px;width:24px;height:20px;border:1px solid #3b3c41;border-radius:2px;background:#25262a"></div>
<div class="a" style="left:2380px;top:699px;font-size:9.8px;line-height:12px;color:#e8e8e8">Fit</div>
<svg class="a" style="left:2403px;top:701px" width="9" height="9" viewBox="0 0 9 9"><rect width="9" height="9" rx="1" fill="#eee"/><rect x="2" y="4" width="5" height="1.3" fill="#202125"/></svg>
<div class="a" style="left:2419px;top:704px;width:59px;height:3px;border-radius:2px;background:#3a3b40"></div>
<div class="a" style="left:2419px;top:704px;width:12px;height:3px;border-radius:2px;background:#2a3340"></div>
<div class="a" style="left:2427px;top:699px;width:12px;height:12px;border-radius:50%;background:#2c2d31;border:1px solid #6a6b70"></div>
<svg class="a" style="left:2485px;top:701px" width="9" height="9" viewBox="0 0 9 9"><rect width="9" height="9" rx="1" fill="#eee"/><rect x="2" y="4" width="5" height="1.3" fill="#202125"/><rect x="3.85" y="2" width="1.3" height="5" fill="#202125"/></svg>
<div class="a" style="left:2499px;top:696px;width:56px;height:20px;border:1px solid #3b3c41;border-radius:2px;background:#25262a"></div>
<div class="a" style="left:2503px;top:699px;font-size:9.8px;line-height:12px;color:#e8e8e8;letter-spacing:-0.3px">100%</div>
<svg class="a" style="left:2541px;top:703px" width="8" height="5" viewBox="0 0 8 5"><path d="M0.5 0.5 l3.5 3.5 l3.5 -3.5" stroke="#ccc" fill="none" stroke-width="1"/></svg>
<div class="a" style="left:1364px;top:50px;width:1112px;height:609px;background:linear-gradient(180deg,#c5cfe1 0px,#c8d2e3 150px,#d3dcec 420px,#dbe4f3 580px);overflow:hidden">
<div class="a" style="left:0;top:0;width:2.5px;height:609px;background:#e8251f;z-index:5"></div>
<div class="a" style="left:1109px;top:0;width:3px;height:609px;background:#e8251f;z-index:5"></div>
<div class="a" style="left:0;top:606.3px;width:1112px;height:2.7px;background:#e8251f;z-index:5"></div>
<div class="a" style="left:2px;top:0;width:1108px;height:17px;background:#ffffff"></div>
<div class="a" style="left:2px;top:16.5px;width:1108px;height:1px;background:#b8e6a8"></div>
<div class="a" style="left:2.5px;top:0.5px;width:38px;height:16.5px;background:#1a6ecf"></div>
<div class="a" style="left:14px;top:4px;font-size:8px;line-height:11px;color:#e8f0ff">File</div>
<div class="a" style="left:51px;top:4px;font-size:8px;line-height:11px;color:#3a3a3a">Home</div>
<div class="a" style="left:91px;top:4px;font-size:8px;line-height:11px;color:#3a3a3a">View</div>
<div class="a" style="left:118px;top:0;width:42px;height:18px;background:#f5f6f7;border:1px solid #b8e6a8;border-bottom:none"></div>
<div class="a" style="left:132px;top:4px;font-size:8px;line-height:11px;color:#3a3a3a">Text</div>
<svg class="a" style="left:1085px;top:9px" width="8" height="5" viewBox="0 0 8 5"><path d="M0.5 4.5 l3.5 -3.5 l3.5 3.5" stroke="#aaa" fill="none" stroke-width="0.9"/></svg>
<div class="a" style="left:1097px;top:2px;width:14px;height:14px;border-radius:50%;background:#1a6ecf"></div>
<div class="a" style="left:1101px;top:3px;font-size:10px;line-height:12px;color:#fff">?</div>
<div class="a" style="left:2.5px;top:17.5px;width:1107px;height:64.5px;background:#f4f5f8"></div>
<div class="a" style="left:-4px;top:71px;width:80px;text-align:center;font-size:8.2px;line-height:11px;color:#777">Clipboard</div>
<div class="a" style="left:82px;top:71px;width:80px;text-align:center;font-size:8.2px;line-height:11px;color:#777">Font</div>
<div class="a" style="left:166px;top:71px;width:80px;text-align:center;font-size:8.2px;line-height:11px;color:#777">Background</div>
<div class="a" style="left:324px;top:71px;width:80px;text-align:center;font-size:8.2px;line-height:11px;color:#777">Colors</div>
<div class="a" style="left:72px;top:20px;width:1px;height:60px;background:#e2e3e8"></div>
<div class="a" style="left:175px;top:20px;width:1px;height:60px;background:#e2e3e8"></div>
<div class="a" style="left:240px;top:20px;width:1px;height:60px;background:#e2e3e8"></div>
<div class="a" style="left:491px;top:20px;width:1px;height:60px;background:#e2e3e8"></div>
<div class="a" style="left:529px;top:20px;width:1px;height:60px;background:#e2e3e8"></div>
<svg class="a" style="left:10px;top:22px" width="18" height="21" viewBox="0 0 18 21"><rect x="1" y="2" width="16" height="18" rx="1" fill="#b08a6a"/><rect x="3" y="4" width="12" height="14" fill="#fafafa"/><rect x="6" y="0.5" width="6" height="3" fill="#8a8a8a"/><rect x="5" y="8" width="8" height="0.8" fill="#ccc"/><rect x="5" y="11" width="8" height="0.8" fill="#ccc"/><rect x="5" y="14" width="8" height="0.8" fill="#ccc"/></svg>
<div class="a" style="left:9px;top:47px;font-size:8px;line-height:11px;color:#555">Paste</div>
<svg class="a" style="left:37px;top:22px" width="8" height="11" viewBox="0 0 8 11"><circle cx="2" cy="9" r="1.6" fill="none" stroke="#9aa8c0" stroke-width="0.9"/><circle cx="6" cy="9" r="1.6" fill="none" stroke="#9aa8c0" stroke-width="0.9"/><path d="M2 7.5 l4 -7 M6 7.5 l-4 -7" stroke="#9aa8c0" stroke-width="0.9"/></svg>
<div class="a" style="left:48px;top:23px;font-size:8px;line-height:11px;color:#aaa">Cut</div>
<svg class="a" style="left:37px;top:37px" width="9" height="11" viewBox="0 0 9 11"><rect x="0.5" y="0.5" width="6" height="7" fill="#eef" stroke="#c0c8d8" stroke-width="0.8"/><rect x="2.5" y="3" width="6" height="7.5" fill="#eef" stroke="#c0c8d8" stroke-width="0.8"/></svg>
<div class="a" style="left:48px;top:38px;font-size:8px;line-height:11px;color:#aaa">Copy</div>
<div class="a" style="left:74px;top:25px;width:82px;height:16px;background:#fff;border:1px solid #d8dbe4"></div>
<div class="a" style="left:77px;top:27.5px;font-size:8.5px;line-height:11px;color:#444">Calibri</div>
<svg class="a" style="left:148px;top:32px" width="5" height="3" viewBox="0 0 5 3"><path d="M0 0 h5 l-2.5 3z" fill="#333"/></svg>
<div class="a" style="left:74px;top:97px;width:29px;height:15px;background:#fff;border:1px solid #d8dbe4;margin-top:-50px"></div>
<div class="a" style="left:77px;top:49px;font-size:8.5px;line-height:11px;color:#444">11</div>
<svg class="a" style="left:97px;top:53px" width="5" height="3" viewBox="0 0 5 3"><path d="M0 0 h5 l-2.5 3z" fill="#333"/></svg>
<div class="a" style="left:105px;top:47px;width:16px;height:16px;background:#cde4f7;border:1px solid #9cc6ea"></div>
<div class="a" style="left:108px;top:48px;font-family:'Liberation Serif',serif;font-size:12px;line-height:14px;color:#1e3050;font-weight:bold">B</div>
<div class="a" style="left:130px;top:48px;font-family:'Liberation Serif',serif;font-size:12px;line-height:14px;color:#334;font-style:italic">I</div>
<div class="a" style="left:143px;top:48px;font-family:'Liberation Serif',serif;font-size:11px;line-height:14px;color:#334;text-decoration:underline">U</div>
<div class="a" style="left:159px;top:50px;font-family:'Liberation Serif',serif;font-size:9px;line-height:12px;color:#334;font-weight:bold">abc</div>
<svg class="a" style="left:179px;top:23px" width="12" height="11" viewBox="0 0 12 11"><rect x="0.5" y="0.5" width="9" height="9" fill="#fff" stroke="#7090c0" stroke-width="0.8" stroke-dasharray="1.5 1"/><rect x="7" y="7" width="4.5" height="3.5" fill="#3f8ee0"/><text x="2.5" y="7.5" font-size="7" fill="#334" font-family="Liberation Serif">A</text></svg>
<div class="a" style="left:194px;top:24px;font-size:8px;line-height:11px;color:#555">Opaque</div>
<div class="a" style="left:177px;top:35px;width:58px;height:15px;background:#cde4f7;border:1px solid #9cc6ea"></div>
<svg class="a" style="left:179px;top:37px" width="12" height="11" viewBox="0 0 12 11"><rect x="0.5" y="0.5" width="9" height="9" fill="none" stroke="#7090c0" stroke-width="0.8" stroke-dasharray="1.5 1"/><rect x="7" y="7" width="4.5" height="3.5" fill="#3f8ee0"/><text x="2.5" y="7.5" font-size="7" fill="#334" font-family="Liberation Serif">A</text></svg>
<div class="a" style="left:194px;top:37.5px;font-size:8px;line-height:11px;color:#555;letter-spacing:-0.1px">Transparent</div>
<div class="a" style="left:242px;top:20px;width:29px;height:47px;background:#cde4f7;border:1px solid #9cc6ea"></div>
<div class="a" style="left:245px;top:22px;width:23px;height:22px;background:#000;border:1px solid #888"></div>
<div class="a" style="left:242px;top:47px;width:29px;text-align:center;font-size:8.5px;line-height:10px;color:#666">Color<br>1</div>
<div class="a" style="left:277px;top:24px;width:18px;height:18px;background:#fff;border:1px solid #c8c8c8"></div>
<div class="a" style="left:271px;top:47px;width:29px;text-align:center;font-size:8.5px;line-height:10px;color:#666">Color<br>2</div>
<div class="a" style="left:301.0px;top:21px;width:14px;height:14px;background:#e0e0e0;padding:1.5px"><div style="width:11px;height:11px;background:#000000"></div></div>
<div class="a" style="left:301.0px;top:37px;width:14px;height:14px;background:#e0e0e0;padding:1.5px"><div style="width:11px;height:11px;background:#ffffff"></div></div>
<div class="a" style="left:301.0px;top:52.5px;width:14px;height:14px;border:1px solid #dcdcdc;background:#f6f6f8"></div>
<div class="a" style="left:316.7px;top:21px;width:14px;height:14px;background:#e0e0e0;padding:1.5px"><div style="width:11px;height:11px;background:#93609f"></div></div>
<div class="a" style="left:316.7px;top:37px;width:14px;height:14px;background:#e0e0e0;padding:1.5px"><div style="width:11px;height:11px;background:#c3c3c3"></div></div>
<div class="a" style="left:316.7px;top:52.5px;width:14px;height:14px;border:1px solid #dcdcdc;background:#f6f6f8"></div>
<div class="a" style="left:332.4px;top:21px;width:14px;height:14px;background:#e0e0e0;padding:1.5px"><div style="width:11px;height:11px;background:#9b1b1f"></div></div>
<div class="a" style="left:332.4px;top:37px;width:14px;height:14px;background:#e0e0e0;padding:1.5px"><div style="width:11px;height:11px;background:#9a6b5a"></div></div>
<div class="a" style="left:332.4px;top:52.5px;width:14px;height:14px;border:1px solid #dcdcdc;background:#f6f6f8"></div>
<div class="a" style="left:348.1px;top:21px;width:14px;height:14px;background:#e0e0e0;padding:1.5px"><div style="width:11px;height:11px;background:#f0302a"></div></div>
<div class="a" style="left:348.1px;top:37px;width:14px;height:14px;background:#e0e0e0;padding:1.5px"><div style="width:11px;height:11px;background:#e6aacc"></div></div>
<div class="a" style="left:348.1px;top:52.5px;width:14px;height:14px;border:1px solid #dcdcdc;background:#f6f6f8"></div>
<div class="a" style="left:363.8px;top:21px;width:14px;height:14px;background:#e0e0e0;padding:1.5px"><div style="width:11px;height:11px;background:#f09a30"></div></div>
<div class="a" style="left:363.8px;top:37px;width:14px;height:14px;background:#e0e0e0;padding:1.5px"><div style="width:11px;height:11px;background:#fcd10c"></div></div>
<div class="a" style="left:363.8px;top:52.5px;width:14px;height:14px;border:1px solid #dcdcdc;background:#f6f6f8"></div>
<div class="a" style="left:379.5px;top:21px;width:14px;height:14px;background:#e0e0e0;padding:1.5px"><div style="width:11px;height:11px;background:#fbd20f"></div></div>
<div class="a" style="left:379.5px;top:37px;width:14px;height:14px;background:#e0e0e0;padding:1.5px"><div style="width:11px;height:11px;background:#e0d9a6"></div></div>
<div class="a" style="left:379.5px;top:52.5px;width:14px;height:14px;border:1px solid #dcdcdc;background:#f6f6f8"></div>
<div class="a" style="left:395.2px;top:21px;width:14px;height:14px;background:#e0e0e0;padding:1.5px"><div style="width:11px;height:11px;background:#22874f"></div></div>
<div class="a" style="left:395.2px;top:37px;width:14px;height:14px;background:#e0e0e0;padding:1.5px"><div style="width:11px;height:11px;background:#a8c63c"></div></div>
<div class="a" style="left:395.2px;top:52.5px;width:14px;height:14px;border:1px solid #dcdcdc;background:#f6f6f8"></div>
<div class="a" style="left:410.9px;top:21px;width:14px;height:14px;background:#e0e0e0;padding:1.5px"><div style="width:11px;height:11px;background:#1a97e6"></div></div>
<div class="a" style="left:410.9px;top:37px;width:14px;height:14px;background:#e0e0e0;padding:1.5px"><div style="width:11px;height:11px;background:#94cdee"></div></div>
<div class="a" style="left:410.9px;top:52.5px;width:14px;height:14px;border:1px solid #dcdcdc;background:#f6f6f8"></div>
<div class="a" style="left:426.6px;top:21px;width:14px;height:14px;background:#e0e0e0;padding:1.5px"><div style="width:11px;height:11px;background:#5b63d4"></div></div>
<div class="a" style="left:426.6px;top:37px;width:14px;height:14px;background:#e0e0e0;padding:1.5px"><div style="width:11px;height:11px;background:#5c86aa"></div></div>
<div class="a" style="left:426.6px;top:52.5px;width:14px;height:14px;border:1px solid #dcdcdc;background:#f6f6f8"></div>
<div class="a" style="left:442.3px;top:21px;width:14px;height:14px;background:#e0e0e0;padding:1.5px"><div style="width:11px;height:11px;background:#8e5ca0"></div></div>
<div class="a" style="left:442.3px;top:37px;width:14px;height:14px;background:#e0e0e0;padding:1.5px"><div style="width:11px;height:11px;background:#c7cee0"></div></div>
<div class="a" style="left:442.3px;top:52.5px;width:14px;height:14px;border:1px solid #dcdcdc;background:#f6f6f8"></div>
<svg class="a" style="left:461px;top:22px" width="21" height="21" viewBox="0 0 21 21"><rect width="21" height="21" fill="#e8e8e8"/><rect x="1.0" y="2" width="2.4" height="10" fill="#f03030"/><rect x="3.4" y="2" width="2.4" height="17" fill="#f09a30"/><rect x="5.8" y="2" width="2.4" height="16" fill="#fbd20f"/><rect x="8.2" y="2" width="2.4" height="15" fill="#22a04f"/><rect x="10.6" y="2" width="2.4" height="14" fill="#1a97e6"/><rect x="13.0" y="2" width="2.4" height="13" fill="#5b63d4"/><rect x="15.4" y="2" width="2.4" height="12" fill="#c050c0"/><rect x="17.8" y="2" width="2.4" height="11" fill="#e05080"/><rect x="1" y="13" width="19" height="6" fill="#8a7a70"/></svg>
<div class="a" style="left:455px;top:47px;width:34px;text-align:center;font-size:8.5px;line-height:10px;color:#666">Edit<br>colors</div>
<svg class="a" style="left:497px;top:21px" width="22" height="23" viewBox="0 0 22 23"><rect width="22" height="23" fill="#fdfdfd" stroke="#e0e0e0"/><path d="M11 3 a6.5 6.5 0 0 1 6.5 6.5 q0 4 -6.5 11 q-6.5 -7 -6.5 -11 a6.5 6.5 0 0 1 6.5 -6.5z" fill="#5a7fe0"/><path d="M5 10 q6 -2 12 2 q-3 5 -6 8 q-4 -4 -6 -10z" fill="#e0508a"/><path d="M8 15 q3 1 5 0 l-2 5z" fill="#f0a030"/></svg>
<div class="a" style="left:490px;top:47px;width:38px;text-align:center;font-size:8.5px;line-height:10px;color:#666;white-space:nowrap">Edit with<br>Paint 3D</div>
<div class="a" style="left:2.5px;top:82px;width:1107px;height:11.5px;background:#f0f1f4;border-bottom:1px solid #c5cfde"></div>
<svg class="a" style="left:0;top:82px" width="1110" height="12" viewBox="0 0 1110 12"><rect x="13.5" y="1" width="0.8" height="10.5" fill="#a0a8b8"/><rect x="19.3" y="8.5" width="0.8" height="3" fill="#a8b0c0"/><rect x="25.1" y="7.5" width="0.8" height="4" fill="#a8b0c0"/><rect x="30.9" y="8.5" width="0.8" height="3" fill="#a8b0c0"/><rect x="36.7" y="7.5" width="0.8" height="4" fill="#a8b0c0"/><rect x="42.5" y="8.5" width="0.8" height="3" fill="#a8b0c0"/><rect x="48.3" y="7.5" width="0.8" height="4" fill="#a8b0c0"/><rect x="54.1" y="8.5" width="0.8" height="3" fill="#a8b0c0"/><rect x="59.9" y="7.5" width="0.8" height="4" fill="#a8b0c0"/><rect x="65.7" y="8.5" width="0.8" height="3" fill="#a8b0c0"/><rect x="71.5" y="1" width="0.8" height="10.5" fill="#a0a8b8"/><rect x="77.3" y="8.5" width="0.8" height="3" fill="#a8b0c0"/><rect x="83.1" y="7.5" width="0.8" height="4" fill="#a8b0c0"/><rect x="88.9" y="8.5" width="0.8" height="3" fill="#a8b0c0"/><rect x="94.7" y="7.5" width="0.8" height="4" fill="#a8b0c0"/><rect x="100.5" y="8.5" width="0.8" height="3" fill="#a8b0c0"/><rect x="106.3" y="7.5" width="0.8" height="4" fill="#a8b0c0"/><rect x="112.1" y="8.5" width="0.8" height="3" fill="#a8b0c0"/><rect x="117.9" y="7.5" width="0.8" height="4" fill="#a8b0c0"/><rect x="123.7" y="8.5" width="0.8" height="3" fill="#a8b0c0"/><rect x="129.5" y="1" width="0.8" height="10.5" fill="#a0a8b8"/><rect x="135.3" y="8.5" width="0.8" height="3" fill="#a8b0c0"/><rect x="141.1" y="7.5" width="0.8" height="4" fill="#a8b0c0"/><rect x="146.9" y="8.5" width="0.8" height="3" fill="#a8b0c0"/><rect x="152.7" y="7.5" width="0.8" height="4" fill="#a8b0c0"/><rect x="158.5" y="8.5" width="0.8" height="3" fill="#a8b0c0"/><rect x="164.3" y="7.5" width="0.8" height="4" fill="#a8b0c0"/><rect x="170.1" y="8.5" width="0.8" height="3" fill="#a8b0c0"/><rect x="175.9" y="7.5" width="0.8" height="4" fill="#a8b0c0"/><rect x="181.7" y="8.5" width="0.8" height="3" fill="#a8b0c0"/><rect x="187.5" y="1" width="0.8" height="10.5" fill="#a0a8b8"/><rect x="193.3" y="8.5" width="0.8" height="3" fill="#a8b0c0"/><rect x="199.1" y="7.5" width="0.8" height="4" fill="#a8b0c0"/><rect x="204.9" y="8.5" width="0.8" height="3" fill="#a8b0c0"/><rect x="210.7" y="7.5" width="0.8" height="4" fill="#a8b0c0"/><rect x="216.5" y="8.5" width="0.8" height="3" fill="#a8b0c0"/><rect x="222.3" y="7.5" width="0.8" height="4" fill="#a8b0c0"/><rect x="228.1" y="8.5" width="0.8" height="3" fill="#a8b0c0"/><rect x="233.9" y="7.5" width="0.8" height="4" fill="#a8b0c0"/><rect x="239.7" y="8.5" width="0.8" height="3" fill="#a8b0c0"/><rect x="245.5" y="1" width="0.8" height="10.5" fill="#a0a8b8"/><rect x="251.3" y="8.5" width="0.8" height="3" fill="#a8b0c0"/><rect x="257.1" y="7.5" width="0.8" height="4" fill="#a8b0c0"/><rect x="262.9" y="8.5" width="0.8" height="3" fill="#a8b0c0"/><rect x="268.7" y="7.5" width="0.8" height="4" fill="#a8b0c0"/><rect x="274.5" y="8.5" width="0.8" height="3" fill="#a8b0c0"/><rect x="280.3" y="7.5" width="0.8" height="4" fill="#a8b0c0"/><rect x="286.1" y="8.5" width="0.8" height="3" fill="#a8b0c0"/><rect x="291.9" y="7.5" width="0.8" height="4" fill="#a8b0c0"/><rect x="297.7" y="8.5" width="0.8" height="3" fill="#a8b0c0"/><rect x="303.5" y="1" width="0.8" height="10.5" fill="#a0a8b8"/><rect x="309.3" y="8.5" width="0.8" height="3" fill="#a8b0c0"/><rect x="315.1" y="7.5" width="0.8" height="4" fill="#a8b0c0"/><rect x="320.9" y="8.5" width="0.8" height="3" fill="#a8b0c0"/><rect x="326.7" y="7.5" width="0.8" height="4" fill="#a8b0c0"/><rect x="332.5" y="8.5" width="0.8" height="3" fill="#a8b0c0"/><rect x="338.3" y="7.5" width="0.8" height="4" fill="#a8b0c0"/><rect x="344.1" y="8.5" width="0.8" height="3" fill="#a8b0c0"/><rect x="349.9" y="7.5" width="0.8" height="4" fill="#a8b0c0"/><rect x="355.7" y="8.5" width="0.8" height="3" fill="#a8b0c0"/><rect x="361.5" y="1" width="0.8" height="10.5" fill="#a0a8b8"/><rect x="367.3" y="8.5" width="0.8" height="3" fill="#a8b0c0"/><rect x="373.1" y="7.5" width="0.8" height="4" fill="#a8b0c0"/><rect x="378.9" y="8.5" width="0.8" height="3" fill="#a8b0c0"/><rect x="384.7" y="7.5" width="0.8" height="4" fill="#a8b0c0"/><rect x="390.5" y="8.5" width="0.8" height="3" fill="#a8b0c0"/><rect x="396.3" y="7.5" width="0.8" height="4" fill="#a8b0c0"/><rect x="402.1" y="8.5" width="0.8" height="3" fill="#a8b0c0"/><rect x="407.9" y="7.5" width="0.8" height="4" fill="#a8b0c0"/><rect x="413.7" y="8.5" width="0.8" height="3" fill="#a8b0c0"/><rect x="419.5" y="1" width="0.8" height="10.5" fill="#a0a8b8"/><rect x="425.3" y="8.5" width="0.8" height="3" fill="#a8b0c0"/><rect x="431.1" y="7.5" width="0.8" height="4" fill="#a8b0c0"/><rect x="436.9" y="8.5" width="0.8" height="3" fill="#a8b0c0"/><rect x="442.7" y="7.5" width="0.8" height="4" fill="#a8b0c0"/><rect x="448.5" y="8.5" width="0.8" height="3" fill="#a8b0c0"/><rect x="454.3" y="7.5" width="0.8" height="4" fill="#a8b0c0"/><rect x="460.1" y="8.5" width="0.8" height="3" fill="#a8b0c0"/><rect x="465.9" y="7.5" width="0.8" height="4" fill="#a8b0c0"/><rect x="471.7" y="8.5" width="0.8" height="3" fill="#a8b0c0"/><rect x="477.5" y="1" width="0.8" height="10.5" fill="#a0a8b8"/><rect x="483.3" y="8.5" width="0.8" height="3" fill="#a8b0c0"/><rect x="489.1" y="7.5" width="0.8" height="4" fill="#a8b0c0"/><rect x="494.9" y="8.5" width="0.8" height="3" fill="#a8b0c0"/><rect x="500.7" y="7.5" width="0.8" height="4" fill="#a8b0c0"/><rect x="506.5" y="8.5" width="0.8" height="3" fill="#a8b0c0"/><rect x="512.3" y="7.5" width="0.8" height="4" fill="#a8b0c0"/><rect x="518.1" y="8.5" width="0.8" height="3" fill="#a8b0c0"/><rect x="523.9" y="7.5" width="0.8" height="4" fill="#a8b0c0"/><rect x="529.7" y="8.5" width="0.8" height="3" fill="#a8b0c0"/><rect x="535.5" y="1" width="0.8" height="10.5" fill="#a0a8b8"/><rect x="541.3" y="8.5" width="0.8" height="3" fill="#a8b0c0"/><rect x="547.1" y="7.5" width="0.8" height="4" fill="#a8b0c0"/><rect x="552.9" y="8.5" width="0.8" height="3" fill="#a8b0c0"/><rect x="558.7" y="7.5" width="0.8" height="4" fill="#a8b0c0"/><rect x="564.5" y="8.5" width="0.8" height="3" fill="#a8b0c0"/><rect x="570.3" y="7.5" width="0.8" height="4" fill="#a8b0c0"/><rect x="576.1" y="8.5" width="0.8" height="3" fill="#a8b0c0"/><rect x="581.9" y="7.5" width="0.8" height="4" fill="#a8b0c0"/><rect x="587.7" y="8.5" width="0.8" height="3" fill="#a8b0c0"/><rect x="593.5" y="1" width="0.8" height="10.5" fill="#a0a8b8"/><rect x="599.3" y="8.5" width="0.8" height="3" fill="#a8b0c0"/><rect x="605.1" y="7.5" width="0.8" height="4" fill="#a8b0c0"/><rect x="610.9" y="8.5" width="0.8" height="3" fill="#a8b0c0"/><rect x="616.7" y="7.5" width="0.8" height="4" fill="#a8b0c0"/><rect x="622.5" y="8.5" width="0.8" height="3" fill="#a8b0c0"/><rect x="628.3" y="7.5" width="0.8" height="4" fill="#a8b0c0"/><rect x="634.1" y="8.5" width="0.8" height="3" fill="#a8b0c0"/><rect x="639.9" y="7.5" width="0.8" height="4" fill="#a8b0c0"/><rect x="645.7" y="8.5" width="0.8" height="3" fill="#a8b0c0"/><rect x="651.5" y="1" width="0.8" height="10.5" fill="#a0a8b8"/><rect x="657.3" y="8.5" width="0.8" height="3" fill="#a8b0c0"/><rect x="663.1" y="7.5" width="0.8" height="4" fill="#a8b0c0"/><rect x="668.9" y="8.5" width="0.8" height="3" fill="#a8b0c0"/><rect x="674.7" y="7.5" width="0.8" height="4" fill="#a8b0c0"/><rect x="680.5" y="8.5" width="0.8" height="3" fill="#a8b0c0"/><rect x="686.3" y="7.5" width="0.8" height="4" fill="#a8b0c0"/><rect x="692.1" y="8.5" width="0.8" height="3" fill="#a8b0c0"/><rect x="697.9" y="7.5" width="0.8" height="4" fill="#a8b0c0"/><rect x="703.7" y="8.5" width="0.8" height="3" fill="#a8b0c0"/><rect x="709.5" y="1" width="0.8" height="10.5" fill="#a0a8b8"/><rect x="715.3" y="8.5" width="0.8" height="3" fill="#a8b0c0"/><rect x="721.1" y="7.5" width="0.8" height="4" fill="#a8b0c0"/><rect x="726.9" y="8.5" width="0.8" height="3" fill="#a8b0c0"/><rect x="732.7" y="7.5" width="0.8" height="4" fill="#a8b0c0"/><rect x="738.5" y="8.5" width="0.8" height="3" fill="#a8b0c0"/><rect x="744.3" y="7.5" width="0.8" height="4" fill="#a8b0c0"/><rect x="750.1" y="8.5" width="0.8" height="3" fill="#a8b0c0"/><rect x="755.9" y="7.5" width="0.8" height="4" fill="#a8b0c0"/><rect x="761.7" y="8.5" width="0.8" height="3" fill="#a8b0c0"/><rect x="767.5" y="1" width="0.8" height="10.5" fill="#a0a8b8"/><rect x="773.3" y="8.5" width="0.8" height="3" fill="#a8b0c0"/><rect x="779.1" y="7.5" width="0.8" height="4" fill="#a8b0c0"/><rect x="784.9" y="8.5" width="0.8" height="3" fill="#a8b0c0"/><rect x="790.7" y="7.5" width="0.8" height="4" fill="#a8b0c0"/><rect x="796.5" y="8.5" width="0.8" height="3" fill="#a8b0c0"/><rect x="802.3" y="7.5" width="0.8" height="4" fill="#a8b0c0"/><rect x="808.1" y="8.5" width="0.8" height="3" fill="#a8b0c0"/><rect x="813.9" y="7.5" width="0.8" height="4" fill="#a8b0c0"/><rect x="819.7" y="8.5" width="0.8" height="3" fill="#a8b0c0"/><rect x="825.5" y="1" width="0.8" height="10.5" fill="#a0a8b8"/><rect x="831.3" y="8.5" width="0.8" height="3" fill="#a8b0c0"/><rect x="837.1" y="7.5" width="0.8" height="4" fill="#a8b0c0"/><rect x="842.9" y="8.5" width="0.8" height="3" fill="#a8b0c0"/><rect x="848.7" y="7.5" width="0.8" height="4" fill="#a8b0c0"/><rect x="854.5" y="8.5" width="0.8" height="3" fill="#a8b0c0"/><rect x="860.3" y="7.5" width="0.8" height="4" fill="#a8b0c0"/><rect x="866.1" y="8.5" width="0.8" height="3" fill="#a8b0c0"/><rect x="871.9" y="7.5" width="0.8" height="4" fill="#a8b0c0"/><rect x="877.7" y="8.5" width="0.8" height="3" fill="#a8b0c0"/><rect x="883.5" y="1" width="0.8" height="10.5" fill="#a0a8b8"/><rect x="889.3" y="8.5" width="0.8" height="3" fill="#a8b0c0"/><rect x="895.1" y="7.5" width="0.8" height="4" fill="#a8b0c0"/><rect x="900.9" y="8.5" width="0.8" height="3" fill="#a8b0c0"/><rect x="906.7" y="7.5" width="0.8" height="4" fill="#a8b0c0"/><rect x="912.5" y="8.5" width="0.8" height="3" fill="#a8b0c0"/><rect x="918.3" y="7.5" width="0.8" height="4" fill="#a8b0c0"/><rect x="924.1" y="8.5" width="0.8" height="3" fill="#a8b0c0"/><rect x="929.9" y="7.5" width="0.8" height="4" fill="#a8b0c0"/><rect x="935.7" y="8.5" width="0.8" height="3" fill="#a8b0c0"/><rect x="941.5" y="1" width="0.8" height="10.5" fill="#a0a8b8"/><rect x="947.3" y="8.5" width="0.8" height="3" fill="#a8b0c0"/><rect x="953.1" y="7.5" width="0.8" height="4" fill="#a8b0c0"/><rect x="958.9" y="8.5" width="0.8" height="3" fill="#a8b0c0"/><rect x="964.7" y="7.5" width="0.8" height="4" fill="#a8b0c0"/><rect x="970.5" y="8.5" width="0.8" height="3" fill="#a8b0c0"/><rect x="976.3" y="7.5" width="0.8" height="4" fill="#a8b0c0"/><rect x="982.1" y="8.5" width="0.8" height="3" fill="#a8b0c0"/><rect x="987.9" y="7.5" width="0.8" height="4" fill="#a8b0c0"/><rect x="993.7" y="8.5" width="0.8" height="3" fill="#a8b0c0"/><rect x="999.5" y="1" width="0.8" height="10.5" fill="#a0a8b8"/><rect x="1005.3" y="8.5" width="0.8" height="3" fill="#a8b0c0"/><rect x="1011.1" y="7.5" width="0.8" height="4" fill="#a8b0c0"/><rect x="1016.9" y="8.5" width="0.8" height="3" fill="#a8b0c0"/><rect x="1022.7" y="7.5" width="0.8" height="4" fill="#a8b0c0"/><rect x="1028.5" y="8.5" width="0.8" height="3" fill="#a8b0c0"/><rect x="1034.3" y="7.5" width="0.8" height="4" fill="#a8b0c0"/><rect x="1040.1" y="8.5" width="0.8" height="3" fill="#a8b0c0"/><rect x="1045.9" y="7.5" width="0.8" height="4" fill="#a8b0c0"/><rect x="1051.7" y="8.5" width="0.8" height="3" fill="#a8b0c0"/><rect x="1057.5" y="1" width="0.8" height="10.5" fill="#a0a8b8"/><rect x="1063.3" y="8.5" width="0.8" height="3" fill="#a8b0c0"/><rect x="1069.1" y="7.5" width="0.8" height="4" fill="#a8b0c0"/><rect x="1074.9" y="8.5" width="0.8" height="3" fill="#a8b0c0"/><rect x="1080.7" y="7.5" width="0.8" height="4" fill="#a8b0c0"/><rect x="1086.5" y="8.5" width="0.8" height="3" fill="#a8b0c0"/><rect x="1092.3" y="7.5" width="0.8" height="4" fill="#a8b0c0"/><rect x="1098.1" y="8.5" width="0.8" height="3" fill="#a8b0c0"/><rect x="1103.9" y="7.5" width="0.8" height="4" fill="#a8b0c0"/></svg>
<div class="a" style="left:15.0px;top:82.5px;font-size:7.5px;line-height:9px;color:#666;letter-spacing:-0.3px">0</div>
<div class="a" style="left:73.0px;top:82.5px;font-size:7.5px;line-height:9px;color:#666;letter-spacing:-0.3px">100</div>
<div class="a" style="left:131.0px;top:82.5px;font-size:7.5px;line-height:9px;color:#666;letter-spacing:-0.3px">200</div>
<div class="a" style="left:189.0px;top:82.5px;font-size:7.5px;line-height:9px;color:#666;letter-spacing:-0.3px">300</div>
<div class="a" style="left:247.0px;top:82.5px;font-size:7.5px;line-height:9px;color:#666;letter-spacing:-0.3px">400</div>
<div class="a" style="left:305.0px;top:82.5px;font-size:7.5px;line-height:9px;color:#666;letter-spacing:-0.3px">500</div>
<div class="a" style="left:363.0px;top:82.5px;font-size:7.5px;line-height:9px;color:#666;letter-spacing:-0.3px">600</div>
<div class="a" style="left:421.0px;top:82.5px;font-size:7.5px;line-height:9px;color:#666;letter-spacing:-0.3px">700</div>
<div class="a" style="left:479.0px;top:82.5px;font-size:7.5px;line-height:9px;color:#666;letter-spacing:-0.3px">800</div>
<div class="a" style="left:537.0px;top:82.5px;font-size:7.5px;line-height:9px;color:#666;letter-spacing:-0.3px">900</div>
<div class="a" style="left:595.0px;top:82.5px;font-size:7.5px;line-height:9px;color:#666;letter-spacing:-0.3px">1000</div>
<div class="a" style="left:653.0px;top:82.5px;font-size:7.5px;line-height:9px;color:#666;letter-spacing:-0.3px">1100</div>
<div class="a" style="left:711.0px;top:82.5px;font-size:7.5px;line-height:9px;color:#666;letter-spacing:-0.3px">1200</div>
<div class="a" style="left:769.0px;top:82.5px;font-size:7.5px;line-height:9px;color:#666;letter-spacing:-0.3px">1300</div>
<div class="a" style="left:827.0px;top:82.5px;font-size:7.5px;line-height:9px;color:#666;letter-spacing:-0.3px">1400</div>
<div class="a" style="left:885.0px;top:82.5px;font-size:7.5px;line-height:9px;color:#666;letter-spacing:-0.3px">1500</div>
<div class="a" style="left:943.0px;top:82.5px;font-size:7.5px;line-height:9px;color:#666;letter-spacing:-0.3px">1600</div>
<div class="a" style="left:1001.0px;top:82.5px;font-size:7.5px;line-height:9px;color:#666;letter-spacing:-0.3px">1700</div>
<div class="a" style="left:1059.0px;top:82.5px;font-size:7.5px;line-height:9px;color:#666;letter-spacing:-0.3px">1800</div>
<div class="a" style="left:423px;top:82px;width:1px;height:11.5px;background:#d04040"></div>
<div class="a" style="left:2.5px;top:93.5px;width:8.5px;height:512px;background:#f0f1f4;border-right:1px solid #c5cfde"></div>
<svg class="a" style="left:2.5px;top:93.5px" width="9" height="512" viewBox="0 0 9 512"><rect x="1" y="3.5" width="7.5" height="0.8" fill="#a8b0c0"/><rect x="5.5" y="9.3" width="3" height="0.8" fill="#a8b0c0"/><rect x="5.5" y="15.1" width="3" height="0.8" fill="#a8b0c0"/><rect x="5.5" y="20.9" width="3" height="0.8" fill="#a8b0c0"/><rect x="5.5" y="26.7" width="3" height="0.8" fill="#a8b0c0"/><rect x="5.5" y="32.5" width="3" height="0.8" fill="#a8b0c0"/><rect x="5.5" y="38.3" width="3" height="0.8" fill="#a8b0c0"/><rect x="5.5" y="44.1" width="3" height="0.8" fill="#a8b0c0"/><rect x="5.5" y="49.9" width="3" height="0.8" fill="#a8b0c0"/><rect x="5.5" y="55.7" width="3" height="0.8" fill="#a8b0c0"/><rect x="1" y="61.5" width="7.5" height="0.8" fill="#a8b0c0"/><rect x="5.5" y="67.3" width="3" height="0.8" fill="#a8b0c0"/><rect x="5.5" y="73.1" width="3" height="0.8" fill="#a8b0c0"/><rect x="5.5" y="78.9" width="3" height="0.8" fill="#a8b0c0"/><rect x="5.5" y="84.7" width="3" height="0.8" fill="#a8b0c0"/><rect x="5.5" y="90.5" width="3" height="0.8" fill="#a8b0c0"/><rect x="5.5" y="96.3" width="3" height="0.8" fill="#a8b0c0"/><rect x="5.5" y="102.1" width="3" height="0.8" fill="#a8b0c0"/><rect x="5.5" y="107.9" width="3" height="0.8" fill="#a8b0c0"/><rect x="5.5" y="113.7" width="3" height="0.8" fill="#a8b0c0"/><rect x="1" y="119.5" width="7.5" height="0.8" fill="#a8b0c0"/><rect x="5.5" y="125.3" width="3" height="0.8" fill="#a8b0c0"/><rect x="5.5" y="131.1" width="3" height="0.8" fill="#a8b0c0"/><rect x="5.5" y="136.9" width="3" height="0.8" fill="#a8b0c0"/><rect x="5.5" y="142.7" width="3" height="0.8" fill="#a8b0c0"/><rect x="5.5" y="148.5" width="3" height="0.8" fill="#a8b0c0"/><rect x="5.5" y="154.3" width="3" height="0.8" fill="#a8b0c0"/><rect x="5.5" y="160.1" width="3" height="0.8" fill="#a8b0c0"/><rect x="5.5" y="165.9" width="3" height="0.8" fill="#a8b0c0"/><rect x="5.5" y="171.7" width="3" height="0.8" fill="#a8b0c0"/><rect x="1" y="177.5" width="7.5" height="0.8" fill="#a8b0c0"/><rect x="5.5" y="183.3" width="3" height="0.8" fill="#a8b0c0"/><rect x="5.5" y="189.1" width="3" height="0.8" fill="#a8b0c0"/><rect x="5.5" y="194.9" width="3" height="0.8" fill="#a8b0c0"/><rect x="5.5" y="200.7" width="3" height="0.8" fill="#a8b0c0"/><rect x="5.5" y="206.5" width="3" height="0.8" fill="#a8b0c0"/><rect x="5.5" y="212.3" width="3" height="0.8" fill="#a8b0c0"/><rect x="5.5" y="218.1" width="3" height="0.8" fill="#a8b0c0"/><rect x="5.5" y="223.9" width="3" height="0.8" fill="#a8b0c0"/><rect x="5.5" y="229.7" width="3" height="0.8" fill="#a8b0c0"/><rect x="1" y="235.5" width="7.5" height="0.8" fill="#a8b0c0"/><rect x="5.5" y="241.3" width="3" height="0.8" fill="#a8b0c0"/><rect x="5.5" y="247.1" width="3" height="0.8" fill="#a8b0c0"/><rect x="5.5" y="252.9" width="3" height="0.8" fill="#a8b0c0"/><rect x="5.5" y="258.7" width="3" height="0.8" fill="#a8b0c0"/><rect x="5.5" y="264.5" width="3" height="0.8" fill="#a8b0c0"/><rect x="5.5" y="270.3" width="3" height="0.8" fill="#a8b0c0"/><rect x="5.5" y="276.1" width="3" height="0.8" fill="#a8b0c0"/><rect x="5.5" y="281.9" width="3" height="0.8" fill="#a8b0c0"/><rect x="5.5" y="287.7" width="3" height="0.8" fill="#a8b0c0"/><rect x="1" y="293.5" width="7.5" height="0.8" fill="#a8b0c0"/><rect x="5.5" y="299.3" width="3" height="0.8" fill="#a8b0c0"/><rect x="5.5" y="305.1" width="3" height="0.8" fill="#a8b0c0"/><rect x="5.5" y="310.9" width="3" height="0.8" fill="#a8b0c0"/><rect x="5.5" y="316.7" width="3" height="0.8" fill="#a8b0c0"/><rect x="5.5" y="322.5" width="3" height="0.8" fill="#a8b0c0"/><rect x="5.5" y="328.3" width="3" height="0.8" fill="#a8b0c0"/><rect x="5.5" y="334.1" width="3" height="0.8" fill="#a8b0c0"/><rect x="5.5" y="339.9" width="3" height="0.8" fill="#a8b0c0"/><rect x="5.5" y="345.7" width="3" height="0.8" fill="#a8b0c0"/><rect x="1" y="351.5" width="7.5" height="0.8" fill="#a8b0c0"/><rect x="5.5" y="357.3" width="3" height="0.8" fill="#a8b0c0"/><rect x="5.5" y="363.1" width="3" height="0.8" fill="#a8b0c0"/><rect x="5.5" y="368.9" width="3" height="0.8" fill="#a8b0c0"/><rect x="5.5" y="374.7" width="3" height="0.8" fill="#a8b0c0"/><rect x="5.5" y="380.5" width="3" height="0.8" fill="#a8b0c0"/><rect x="5.5" y="386.3" width="3" height="0.8" fill="#a8b0c0"/><rect x="5.5" y="392.1" width="3" height="0.8" fill="#a8b0c0"/><rect x="5.5" y="397.9" width="3" height="0.8" fill="#a8b0c0"/><rect x="5.5" y="403.7" width="3" height="0.8" fill="#a8b0c0"/><rect x="1" y="409.5" width="7.5" height="0.8" fill="#a8b0c0"/><rect x="5.5" y="415.3" width="3" height="0.8" fill="#a8b0c0"/><rect x="5.5" y="421.1" width="3" height="0.8" fill="#a8b0c0"/><rect x="5.5" y="426.9" width="3" height="0.8" fill="#a8b0c0"/><rect x="5.5" y="432.7" width="3" height="0.8" fill="#a8b0c0"/><rect x="5.5" y="438.5" width="3" height="0.8" fill="#a8b0c0"/><rect x="5.5" y="444.3" width="3" height="0.8" fill="#a8b0c0"/><rect x="5.5" y="450.1" width="3" height="0.8" fill="#a8b0c0"/><rect x="5.5" y="455.9" width="3" height="0.8" fill="#a8b0c0"/><rect x="5.5" y="461.7" width="3" height="0.8" fill="#a8b0c0"/><rect x="1" y="467.5" width="7.5" height="0.8" fill="#a8b0c0"/><rect x="5.5" y="473.3" width="3" height="0.8" fill="#a8b0c0"/><rect x="5.5" y="479.1" width="3" height="0.8" fill="#a8b0c0"/><rect x="5.5" y="484.9" width="3" height="0.8" fill="#a8b0c0"/><rect x="5.5" y="490.7" width="3" height="0.8" fill="#a8b0c0"/><rect x="5.5" y="496.5" width="3" height="0.8" fill="#a8b0c0"/><rect x="5.5" y="502.3" width="3" height="0.8" fill="#a8b0c0"/><rect x="5.5" y="508.1" width="3" height="0.8" fill="#a8b0c0"/></svg>
<svg class="a" style="left:1px;top:0" width="12" height="608" viewBox="0 0 12 608"><text transform="translate(8,101.7) rotate(-90)" font-size="7" fill="#777" font-family="Liberation Sans" letter-spacing="-0.3">0</text></svg>
<svg class="a" style="left:1px;top:0" width="12" height="608" viewBox="0 0 12 608"><text transform="translate(8,168.1) rotate(-90)" font-size="7" fill="#777" font-family="Liberation Sans" letter-spacing="-0.3">100</text></svg>
<svg class="a" style="left:1px;top:0" width="12" height="608" viewBox="0 0 12 608"><text transform="translate(8,226.1) rotate(-90)" font-size="7" fill="#777" font-family="Liberation Sans" letter-spacing="-0.3">200</text></svg>
<svg class="a" style="left:1px;top:0" width="12" height="608" viewBox="0 0 12 608"><text transform="translate(8,284.1) rotate(-90)" font-size="7" fill="#777" font-family="Liberation Sans" letter-spacing="-0.3">300</text></svg>
<svg class="a" style="left:1px;top:0" width="12" height="608" viewBox="0 0 12 608"><text transform="translate(8,342.1) rotate(-90)" font-size="7" fill="#777" font-family="Liberation Sans" letter-spacing="-0.3">400</text></svg>
<svg class="a" style="left:1px;top:0" width="12" height="608" viewBox="0 0 12 608"><text transform="translate(8,400.1) rotate(-90)" font-size="7" fill="#777" font-family="Liberation Sans" letter-spacing="-0.3">500</text></svg>
<svg class="a" style="left:1px;top:0" width="12" height="608" viewBox="0 0 12 608"><text transform="translate(8,458.1) rotate(-90)" font-size="7" fill="#777" font-family="Liberation Sans" letter-spacing="-0.3">600</text></svg>
<svg class="a" style="left:1px;top:0" width="12" height="608" viewBox="0 0 12 608"><text transform="translate(8,516.1) rotate(-90)" font-size="7" fill="#777" font-family="Liberation Sans" letter-spacing="-0.3">700</text></svg>
<svg class="a" style="left:1px;top:0" width="12" height="608" viewBox="0 0 12 608"><text transform="translate(8,574.1) rotate(-90)" font-size="7" fill="#777" font-family="Liberation Sans" letter-spacing="-0.3">800</text></svg>
<div class="a" style="left:14px;top:97px;width:1056px;height:461px;background:#ffffff;box-shadow:2px 2px 3px rgba(120,140,170,0.5)"></div>
<div class="a" style="left:1068.5px;top:555.5px;width:4px;height:4px;border:0.8px solid #888;background:#fff"></div>
<div class="a" style="left:1068.5px;top:325px;width:4px;height:4px;border:0.8px solid #888;background:#fff"></div>
<svg class="a" style="left:0;top:0" width="1112" height="609" viewBox="1364 50 1112 609"><rect x="1555.25" y="280.25" width="30.25" height="42.75" stroke="#000" stroke-width="3.2" fill="none" stroke-linecap="round" stroke-linecap="square"/><rect x="1500.25" y="383.25" width="47.5" height="36.5" stroke="#000" stroke-width="3.2" fill="none" stroke-linecap="round"/><rect x="1503.5" y="462.75" width="55.75" height="62" stroke="#000" stroke-width="3.2" fill="none" stroke-linecap="round"/><path d="M1590 296 L1647.5 341" stroke="#000" stroke-width="3.2" fill="none" stroke-linecap="round"/><path d="M1649.5 305 L1646 397.5" stroke="#000" stroke-width="3.2" fill="none" stroke-linecap="round"/><path d="M1648 349 L1688 347.5" stroke="#000" stroke-width="3.2" fill="none" stroke-linecap="round"/><path d="M1556 403.75 L1648.75 351" stroke="#000" stroke-width="3.2" fill="none" stroke-linecap="round"/><path d="M1573.75 500 L1647 367.5" stroke="#000" stroke-width="3.2" fill="none" stroke-linecap="round"/><ellipse cx="1721.6" cy="346" rx="31.8" ry="26.5" stroke="#000" stroke-width="3.2" fill="none" stroke-linecap="round"/><ellipse cx="2065" cy="350.75" rx="38.5" ry="26.8" stroke="#000" stroke-width="3.2" fill="none" stroke-linecap="round"/><path d="M1762 323 L2026 319" stroke="#000" stroke-width="3.5" stroke-linecap="round"/><path d="M1760.5 338.25 L2028.75 334" stroke="#000" stroke-width="3.5" stroke-linecap="round"/><text x="1545" y="245.8" font-family="Liberation Sans" font-weight="bold" font-size="9" fill="#1a1a1a" textLength="50" lengthAdjust="spacingAndGlyphs">192.168.1.5</text><text x="1623" y="246.3" font-family="Liberation Sans" font-weight="bold" font-size="9" fill="#1a1a1a" textLength="34" lengthAdjust="spacingAndGlyphs">10.0.0.1</text><text x="1460" y="282.8" font-family="Liberation Sans" font-weight="bold" font-size="9" fill="#1a1a1a" textLength="65" lengthAdjust="spacingAndGlyphs">192.168.1.0/24</text><text x="1660" y="336.3" font-family="Liberation Sans" font-weight="bold" font-size="9" fill="#1a1a1a" textLength="7" lengthAdjust="spacingAndGlyphs">.1</text><text x="1757" y="316.3" font-family="Liberation Sans" font-weight="bold" font-size="9" fill="#1a1a1a" textLength="24" lengthAdjust="spacingAndGlyphs">200...</text><text x="2022.5" y="313.8" font-family="Liberation Sans" font-weight="bold" font-size="9" fill="#1a1a1a" textLength="26.5" lengthAdjust="spacingAndGlyphs">195....</text><text x="1874" y="357.8" font-family="Liberation Sans" font-weight="bold" font-size="9" fill="#1a1a1a" textLength="35" lengthAdjust="spacingAndGlyphs">internet</text><text x="1488" y="360.3" font-family="Liberation Sans" font-weight="bold" font-size="9" fill="#1a1a1a" textLength="22" lengthAdjust="spacingAndGlyphs">nivas</text><text x="1670.3" y="464.3" font-family="Liberation Sans" font-weight="bold" font-size="9" fill="#1a1a1a" textLength="16.700000000000045" lengthAdjust="spacingAndGlyphs">ACL</text><text x="1705.8" y="464.3" font-family="Liberation Sans" font-weight="bold" font-size="9" fill="#1a1a1a" textLength="18.200000000000045" lengthAdjust="spacingAndGlyphs">NAT</text><text x="1742" y="464.3" font-family="Liberation Sans" font-weight="bold" font-size="9" fill="#1a1a1a" textLength="23.5" lengthAdjust="spacingAndGlyphs">RUTA</text><text x="1787" y="465.8" font-family="Liberation Sans" font-weight="bold" font-size="9" fill="#1a1a1a" textLength="21" lengthAdjust="spacingAndGlyphs">ipsec</text><text x="2186" y="304.3" font-family="Liberation Sans" font-weight="bold" font-size="9" fill="#1a1a1a" textLength="34" lengthAdjust="spacingAndGlyphs">10.0.0.1</text><text x="2222.5" y="357.8" font-family="Liberation Sans" font-weight="bold" font-size="9" fill="#1a1a1a" textLength="8.5" lengthAdjust="spacingAndGlyphs">ht</text><rect x="1785" y="454" width="107.5" height="15.5" fill="none" stroke="#6aa8d8" stroke-width="0.8" stroke-dasharray="2.5 2"/><rect x="1783.5" y="452.5" width="3" height="3" fill="#fff" stroke="#888" stroke-width="0.6"/><rect x="1783.5" y="468.0" width="3" height="3" fill="#fff" stroke="#888" stroke-width="0.6"/><rect x="1837.2" y="452.5" width="3" height="3" fill="#fff" stroke="#888" stroke-width="0.6"/><rect x="1837.2" y="468.0" width="3" height="3" fill="#fff" stroke="#888" stroke-width="0.6"/><rect x="1891.0" y="452.5" width="3" height="3" fill="#fff" stroke="#888" stroke-width="0.6"/><rect x="1891.0" y="468.0" width="3" height="3" fill="#fff" stroke="#888" stroke-width="0.6"/><rect x="1783.5" y="460.5" width="3" height="3" fill="#fff" stroke="#888" stroke-width="0.6"/><rect x="1891.0" y="460.5" width="3" height="3" fill="#fff" stroke="#888" stroke-width="0.6"/><rect x="1808.5" y="455" width="0.8" height="13" fill="#222"/></svg>
<div class="a" style="left:2.5px;top:580.5px;width:1107px;height:26px;background:#1e1e1e"></div>
<svg class="a" style="left:0;top:0" width="1112" height="609" viewBox="1364 50 1112 609"><path d="M1376 639 l5 -0.8 v5 h-5z M1382 638 l6.5 -1 v6 h-6.5z M1376 644 h5 v5 l-5 -0.7z M1382 644 h6.5 v6 l-6.5 -1z" fill="#fff"/><circle cx="1418" cy="643" r="4" fill="none" stroke="#ddd" stroke-width="1.1"/><path d="M1415 646 l-3.5 3.5" stroke="#ddd" stroke-width="1.2"/><g transform="translate(1450,645)"><rect x="-7" y="-7" width="14" height="14" fill="#e8eef8"/><rect x="-5" y="-3" width="3" height="6" fill="#2a5cb0"/><path d="M1 2 h5 l-2 -2 M6 2 l-2 2" stroke="#2a5cb0" stroke-width="1.2" fill="none"/></g><g transform="translate(1481,645)"><rect x="-7" y="-7" width="14" height="14" fill="#9b4fd8"/><rect x="-8" y="-4" width="8" height="8" fill="#7a2fb8"/><text x="-7" y="3" font-size="7" font-weight="bold" fill="#fff" font-family="Liberation Sans">N</text></g><g transform="translate(1512,645)"><rect x="-7" y="-7" width="12" height="10" fill="#9ab8e0"/><rect x="-3" y="-2" width="10" height="9" fill="#8a2a2a" stroke="#888" stroke-width="0.8"/></g><g transform="translate(1542,645)"><rect x="-6" y="-7" width="12" height="14" fill="#e8e8d0"/><rect x="-6" y="0" width="12" height="7" fill="#4a9a3a"/><circle cx="0" cy="-1" r="3" fill="#c8a040"/></g><g transform="translate(1573,645)"><rect x="-4.5" y="-7" width="9" height="13" fill="#f0c84a"/><rect x="-4.5" y="-7" width="3" height="13" fill="#d8a838"/></g><g transform="translate(1603,645)"><rect x="-4.5" y="-7" width="9" height="13" fill="#f0c84a"/><rect x="-4.5" y="-7" width="3" height="13" fill="#d8a838"/></g><g transform="translate(1633,645)"><rect x="-4.5" y="-7" width="9" height="13" fill="#f0c84a"/><rect x="-4.5" y="-7" width="3" height="13" fill="#d8a838"/></g><g transform="translate(1663,645)"><rect x="-4.5" y="-7" width="9" height="13" fill="#f0c84a"/><rect x="-4.5" y="-7" width="3" height="13" fill="#d8a838"/></g><g transform="translate(1694,645)"><circle r="7" fill="#db4437"/><path d="M0 0 l6 -3.5 a7 7 0 0 1 -6 10.5z" fill="#0f9d58"/><path d="M0 0 l-6 -3.5 a7 7 0 0 0 6 10.5z" fill="#f4b400"/><circle r="3" fill="#4285f4" stroke="#fff" stroke-width="1.2"/></g><g transform="translate(1725,645)"><circle r="6.5" fill="#e8552a"/><circle cx="0.5" cy="0.5" r="3.8" fill="#7a3ad0"/><path d="M-6 0 a6.5 6.5 0 0 0 12 2" stroke="#f5a020" stroke-width="2" fill="none"/></g><g transform="translate(1754,645)"><path d="M5 2 a5.5 5 0 1 1 0.5 -3 h-9" stroke="#2a9ae8" stroke-width="2.2" fill="none"/><path d="M-7 6 q5 -14 14 -12" stroke="#f0b020" stroke-width="0.9" fill="none"/></g><g transform="translate(1783,645)"><rect x="-3" y="-6" width="10" height="12" fill="#2a7ad0"/><rect x="-7" y="-4" width="8" height="8" fill="#0a5ab8"/><circle cx="-3" cy="0" r="2" fill="none" stroke="#fff" stroke-width="1"/></g><g transform="translate(1812,645)"><path d="M-7 -5 h5 l1 1.5 h8 v9.5 h-14z" fill="#f0b640"/><rect x="-7" y="-2" width="14" height="7.5" fill="#f7cf6a"/></g><g transform="translate(1843,645)"><rect x="-3" y="-7" width="10" height="14" fill="#1e8a4a"/><rect x="-3" y="-1" width="10" height="8" fill="#166a3a"/><rect x="-7" y="-4" width="8" height="8" fill="#107040"/><text x="-6" y="2.8" font-size="6.5" font-weight="bold" fill="#fff" font-family="Liberation Sans">x</text></g><g transform="translate(1873,645)"><rect x="-3" y="-7" width="10" height="14" fill="#1e8a4a"/><rect x="-3" y="-1" width="10" height="8" fill="#166a3a"/><rect x="-7" y="-4" width="8" height="8" fill="#107040"/><text x="-6" y="2.8" font-size="6.5" font-weight="bold" fill="#fff" font-family="Liberation Sans">x</text></g><g transform="translate(1903,645)"><rect x="-3" y="-7" width="10" height="14" fill="#1e8a4a"/><rect x="-3" y="-1" width="10" height="8" fill="#166a3a"/><rect x="-7" y="-4" width="8" height="8" fill="#107040"/><text x="-6" y="2.8" font-size="6.5" font-weight="bold" fill="#fff" font-family="Liberation Sans">x</text></g><g transform="translate(1933,645)"><rect x="-3" y="-7" width="10" height="14" fill="#1e8a4a"/><rect x="-3" y="-1" width="10" height="8" fill="#166a3a"/><rect x="-7" y="-4" width="8" height="8" fill="#107040"/><text x="-6" y="2.8" font-size="6.5" font-weight="bold" fill="#fff" font-family="Liberation Sans">x</text></g><g transform="translate(1963,645)"><rect x="-3" y="-7" width="10" height="14" fill="#1e8a4a"/><rect x="-3" y="-1" width="10" height="8" fill="#166a3a"/><rect x="-7" y="-4" width="8" height="8" fill="#107040"/><text x="-6" y="2.8" font-size="6.5" font-weight="bold" fill="#fff" font-family="Liberation Sans">x</text></g><g transform="translate(1993,645)"><rect x="-3" y="-7" width="10" height="14" fill="#1e8a4a"/><rect x="-3" y="-1" width="10" height="8" fill="#166a3a"/><rect x="-7" y="-4" width="8" height="8" fill="#107040"/><text x="-6" y="2.8" font-size="6.5" font-weight="bold" fill="#fff" font-family="Liberation Sans">x</text></g><g transform="translate(2023,645)"><rect x="-3" y="-7" width="10" height="14" fill="#1e8a4a"/><rect x="-3" y="-1" width="10" height="8" fill="#166a3a"/><rect x="-7" y="-4" width="8" height="8" fill="#107040"/><text x="-6" y="2.8" font-size="6.5" font-weight="bold" fill="#fff" font-family="Liberation Sans">x</text></g><g transform="translate(2053,645)"><rect x="-3" y="-7" width="10" height="14" fill="#1e8a4a"/><rect x="-3" y="-1" width="10" height="8" fill="#166a3a"/><rect x="-7" y="-4" width="8" height="8" fill="#107040"/><text x="-6" y="2.8" font-size="6.5" font-weight="bold" fill="#fff" font-family="Liberation Sans">x</text></g><g transform="translate(2084,645)"><rect x="-3" y="-7" width="10" height="14" fill="#1e8a4a"/><rect x="-3" y="-1" width="10" height="8" fill="#166a3a"/><rect x="-7" y="-4" width="8" height="8" fill="#107040"/><text x="-6" y="2.8" font-size="6.5" font-weight="bold" fill="#fff" font-family="Liberation Sans">x</text></g><g transform="translate(2114,645)"><circle r="7" fill="#3a5a9a" stroke="#d8e0f0" stroke-width="1.5"/><rect x="-3" y="-1" width="6" height="5" fill="#111"/><path d="M-2 -1 v-2 a2 2 0 0 1 4 0 v2" stroke="#111" fill="none" stroke-width="1.2"/></g><rect x="2160" y="630.5" width="30" height="26" fill="#2e2e2e"/><rect x="2281" y="630.5" width="30" height="26" fill="#3a3a3a"/><g transform="translate(2145,645)"><circle cx="3" cy="-4" r="2.5" fill="#6a72d8"/><rect x="-1" y="-2" width="8" height="8" rx="2" fill="#5a62c8"/><rect x="-7" y="-5" width="8" height="8" fill="#464eb8"/><text x="-5.5" y="1.8" font-size="6" font-weight="bold" fill="#fff" font-family="Liberation Sans">T</text></g><g transform="translate(2174,645)"><circle cx="3" cy="-4" r="2.5" fill="#6a72d8"/><rect x="-1" y="-2" width="8" height="8" rx="2" fill="#5a62c8"/><rect x="-7" y="-5" width="8" height="8" fill="#464eb8"/><text x="-5.5" y="1.8" font-size="6" font-weight="bold" fill="#fff" font-family="Liberation Sans">T</text></g><g transform="translate(2205,645)"><circle cx="3" cy="-4" r="2.5" fill="#6a72d8"/><rect x="-1" y="-2" width="8" height="8" rx="2" fill="#5a62c8"/><rect x="-7" y="-5" width="8" height="8" fill="#464eb8"/><text x="-5.5" y="1.8" font-size="6" font-weight="bold" fill="#fff" font-family="Liberation Sans">T</text></g><circle cx="2150" cy="649.5" r="3" fill="#d83030"/><g transform="translate(2235,645)"><rect x="-5" y="-7" width="10" height="14" fill="#fff"/><path d="M-3 3 q3 -9 3 -6 q0 3 3 6" stroke="#e02020" fill="none" stroke-width="1.4"/></g><g transform="translate(2265,645)"><path d="M-6 6 l3 -12 h9 l-2 12z" fill="#8ac8e8"/><path d="M-6 6 l3 -12 h2 l-3 12z" fill="#5a9ac0"/></g><g transform="translate(2296,645)"><ellipse rx="7" ry="6" fill="#e8d8c0"/><circle cx="-3" cy="-2" r="1.3" fill="#e03030"/><circle cx="0" cy="-3" r="1.3" fill="#30a030"/><circle cx="3" cy="-1" r="1.3" fill="#3060e0"/><path d="M2 5 l6 -11" stroke="#c08040" stroke-width="1.5"/></g><path d="M2317 646.5 l4 -4 l4 4" stroke="#ddd" fill="none" stroke-width="1"/><circle cx="2338" cy="644.5" r="4" fill="#2a8ae0"/><circle cx="2341" cy="646.5" r="3" fill="#5ab0f0"/><rect x="2350" y="638.5" width="11" height="8" fill="none" stroke="#ddd" stroke-width="0.9"/><rect x="2353" y="647.5" width="5" height="1" fill="#ddd"/><text x="2369" y="648" font-size="8.5" fill="#e8e8e8" font-family="Liberation Sans" textLength="17" lengthAdjust="spacingAndGlyphs">HRV</text><text x="2404" y="641.3" font-size="8" fill="#e8e8e8" font-family="Liberation Sans" textLength="20" lengthAdjust="spacingAndGlyphs">10:58</text><text x="2396" y="654.3" font-size="8" fill="#e8e8e8" font-family="Liberation Sans" textLength="37" lengthAdjust="spacingAndGlyphs">14.3.2023.</text><path d="M2446 638.5 h11 v8 h-4 l-3 3 v-3 h-4z" fill="none" stroke="#ddd" stroke-width="0.9"/></svg>
<div class="a" style="left:371px;top:551px;width:323px;height:34px;background:#2f2f2f;border-radius:3px;overflow:hidden;box-shadow:0 1px 3px rgba(0,0,0,0.4)"><div class="a" style="left:0;top:0;width:46px;height:34px;background:#393939"></div><div class="a" style="left:46px;top:0;width:1px;height:34px;background:#1e1e1e"></div><div class="a" style="left:47px;top:0;width:141px;height:34px;background:#3a3a3a"></div><div class="a" style="left:289px;top:0;width:34px;height:34px;background:#a3283d"></div><div class="a" style="left:10px;top:11px;font-size:9px;line-height:12px;color:#c8c8c8;letter-spacing:-0.2px">26:07</div></div>
<svg class="a" style="left:0;top:0" width="1112" height="609" viewBox="1364 50 1112 609"><rect x="1792" y="613" width="10" height="9" rx="1" fill="#eee"/><path d="M1802 616 l5 -3 v9 l-5 -3z" fill="#eee"/><path d="M1791 611 l14 14" stroke="#2f2f2f" stroke-width="2.5"/><path d="M1791 611 l14 14" stroke="#eee" stroke-width="0.9"/><rect x="1831" y="609" width="5" height="10" rx="2.5" fill="#eee"/><path d="M1829 615 a4.5 4.5 0 0 0 9 0 M1833.5 620 v3" stroke="#eee" fill="none" stroke-width="1"/><rect x="1860.5" y="612" width="14" height="11" rx="1.5" fill="none" stroke="#eee" stroke-width="1"/><path d="M1867.5 620 v-6 M1865 616 l2.5 -2.5 l2.5 2.5" stroke="#eee" fill="none" stroke-width="1"/><circle cx="1897" cy="618" r="1.3" fill="#eee"/><circle cx="1902" cy="618" r="1.3" fill="#eee"/><circle cx="1907" cy="618" r="1.3" fill="#eee"/><path d="M1933 624 q-4 -4 -3 -7 q1 -1 2 1 v-7 q1.5 -1.5 2 0 v6 v-7 q1.5 -1.5 2.5 0 v7 v-6 q1.5 -1.5 2 0 v6 v-4 q1.5 -1 2 0 v5 q0 5 -4 5z" fill="none" stroke="#eee" stroke-width="0.9"/><circle cx="1971" cy="618" r="6.5" fill="none" stroke="#eee" stroke-width="0.9"/><path d="M1968 616.5 h6 M1968 619 h4" stroke="#eee" stroke-width="0.9"/><circle cx="2003" cy="614" r="3" fill="none" stroke="#eee" stroke-width="0.9"/><rect x="1998" y="619" width="10" height="6" rx="2.5" fill="none" stroke="#eee" stroke-width="0.9"/><circle cx="2010" cy="615" r="2.2" fill="none" stroke="#eee" stroke-width="0.9"/><path d="M2034 620 q7 -7 14 0 l-2.5 1.2 l-1.5 -2 q-3 -1 -6 0 l-1.5 2z" fill="#fff"/></svg>
</div>
</body></html>
